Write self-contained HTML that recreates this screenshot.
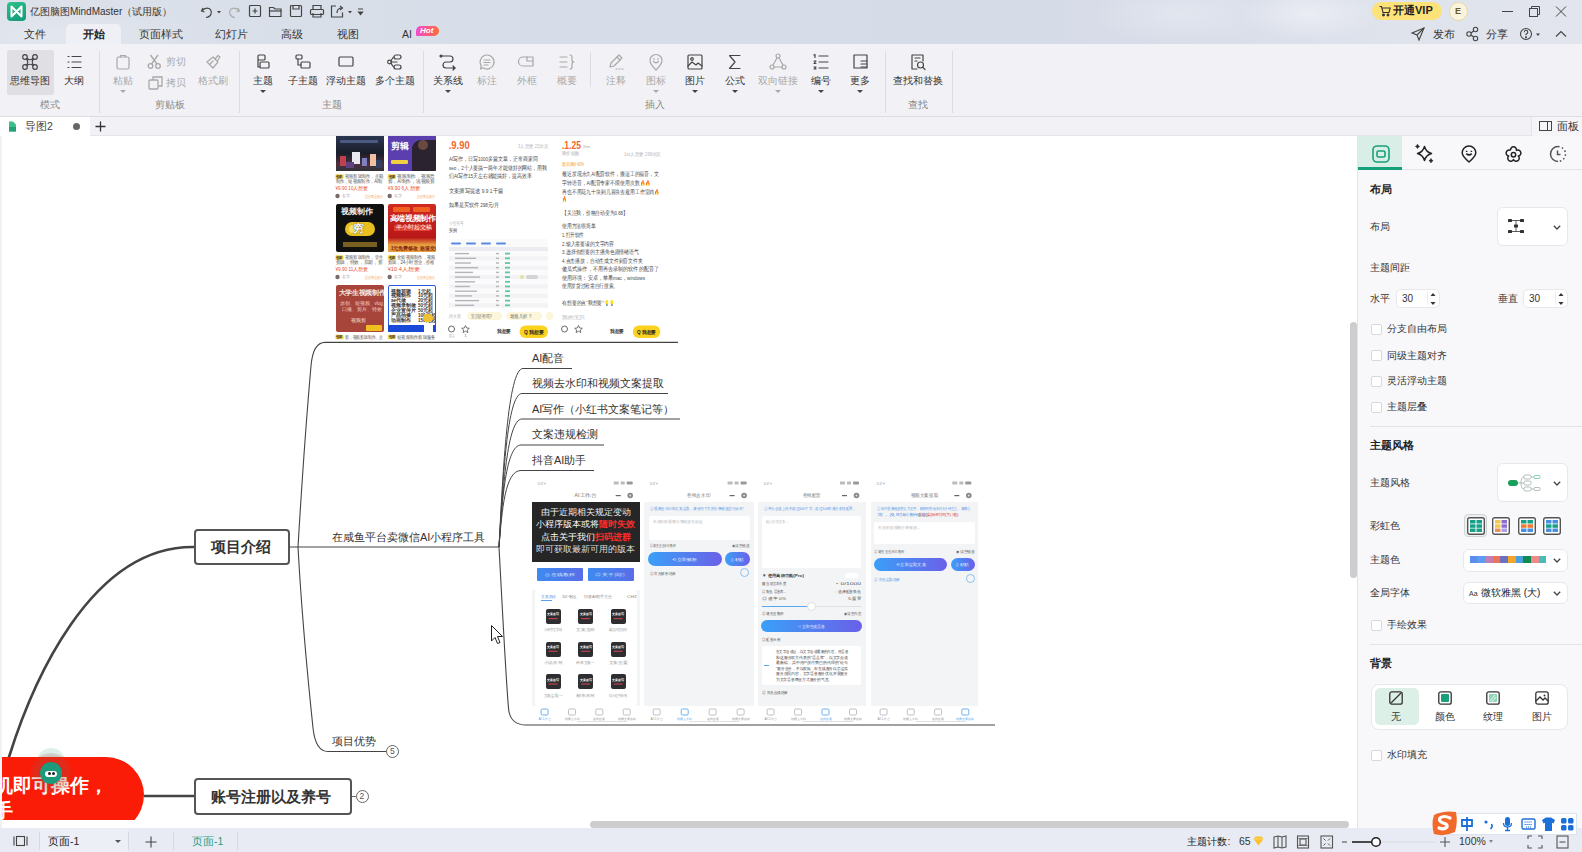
<!DOCTYPE html>
<html><head><meta charset="utf-8">
<style>
*{margin:0;padding:0;box-sizing:border-box}
html,body{width:1582px;height:852px;overflow:hidden;background:#fff;font-family:"Liberation Sans",sans-serif;color:#333}
.a{position:absolute}
.t{position:absolute;white-space:nowrap;line-height:1}
#titlebar{left:0;top:0;width:1582px;height:44px;background:radial-gradient(ellipse 70px 26px at 1310px 14px,rgba(238,240,246,0.8),rgba(238,240,246,0) 100%),radial-gradient(ellipse 90px 30px at 1180px 14px,rgba(232,236,243,0.6),rgba(232,236,243,0) 100%),radial-gradient(ellipse 140px 30px at 60px 36px,rgba(230,234,241,0.7),rgba(230,234,241,0) 100%),linear-gradient(90deg,#dce1ea 0%,#d9dfe9 20%,#d6dce8 45%,#d5dbe7 65%,#d9dde9 75%,#dfe3ec 88%,#e2e5ed 100%)}
#ribbon{left:0;top:44px;width:1582px;height:73px;background:#f2f2f6;border-bottom:1px solid #dcdce2}
#doctabs{left:0;top:117px;width:1582px;height:19px;background:#f2f2f6;border-bottom:1px solid #e4e4ea}
#canvas{left:0;top:136px;width:1357px;height:692px;background:#fff;overflow:hidden}
#panel{left:1357px;top:136px;width:225px;height:692px;background:#f8f8fb;border-left:1px solid #e2e2e8}
#status{left:0;top:828px;width:1582px;height:24px;background:#e8ebf3}
.rl{font-size:11px;color:#333}
.rg{font-size:11px;color:#aaa}
.gl{font-size:10px;color:#999}
.sep{position:absolute;top:52px;width:1px;height:60px;background:#dedee4}
svg{position:absolute;overflow:visible}
</style></head><body>
<!-- TITLE BAR -->
<div id="titlebar" class="a"></div>
<div id="ribbon" class="a"></div>
<!--TITLE-->
<!-- logo -->
<div class="a" style="left:7px;top:2px;width:19px;height:19px;border-radius:4px;background:linear-gradient(160deg,#2cc08a,#16987a)"></div>
<svg style="left:7px;top:2px" width="19" height="19" viewBox="0 0 19 19"><path d="M4.5 4.5 L4.5 14.5 L14.5 4.5 L14.5 14.5 Z" fill="none" stroke="#fff" stroke-width="2" stroke-linejoin="round"/></svg>
<div class="t" style="left:30px;top:7px;font-size:10px;color:#333">亿图脑图MindMaster（试用版）</div>
<!-- quick access -->
<svg style="left:200px;top:4px" width="170" height="16" viewBox="0 0 170 16" fill="none" stroke="#444" stroke-width="1.2">
 <path d="M3 4 L1.5 7 L4.5 8"/><path d="M2 7 Q5 3 9 4.5 Q12 6 11 10 Q10 13 6 13.5"/>
 <path d="M17 7 l4 0 l-2 2.5z" fill="#444" stroke="none"/>
 <g stroke="#aaa"><path d="M38 4 L39.5 7 L36.5 8"/><path d="M39 7 Q36 3 32 4.5 Q29 6 30 10 Q31 13 35 13.5"/></g>
 <rect x="49.5" y="1.5" width="11" height="11" rx="1"/><path d="M55 4.5v5M52.5 7h5"/>
 <path d="M69.5 3.5h4l1.5 1.5h6v7.5h-11.5z"/><path d="M69.5 7h12"/>
 <rect x="90.5" y="1.5" width="11" height="11" rx="1"/><path d="M93 1.5v3.5h6v-3.5"/>
 <path d="M113 5.5v-4h8v4"/><rect x="110.5" y="5.5" width="13" height="5" rx="1"/><path d="M113 9v4h8v-4"/>
 <path d="M136 2h-4.5v11h11v-4.5"/><path d="M137 9 Q137 4 142 4"/><path d="M140 2l2.5 2l-2.5 2"/>
 <path d="M148 7 l4 0 l-2 2.5z" fill="#444" stroke="none"/>
 <path d="M158 5h5M158.5 8l2 2.5l2-2.5z" fill="#444"/>
</svg>
<!-- tabs -->
<div class="a" style="left:66px;top:24px;width:55px;height:20px;border-radius:5px 5px 0 0;background:#eef0f5"></div>
<div class="t" style="left:24px;top:29px;font-size:10.5px;color:#333">文件</div>
<div class="t" style="left:83px;top:29px;font-size:10.5px;color:#222;font-weight:bold">开始</div>
<div class="t" style="left:139px;top:29px;font-size:10.5px;color:#333">页面样式</div>
<div class="t" style="left:215px;top:29px;font-size:10.5px;color:#333">幻灯片</div>
<div class="t" style="left:281px;top:29px;font-size:10.5px;color:#333">高级</div>
<div class="t" style="left:337px;top:29px;font-size:10.5px;color:#333">视图</div>
<div class="t" style="left:402px;top:29px;font-size:10.5px;color:#333">AI</div>
<div class="a" style="left:416px;top:26px;width:23px;height:10px;border-radius:5px 5px 5px 1px;background:linear-gradient(90deg,#f04bd0,#ff6b3a)"></div>
<div class="t" style="left:420px;top:27px;font-size:8px;color:#fff;font-weight:bold;font-style:italic">Hot</div>
<!-- right side -->
<div class="a" style="left:1372px;top:2px;width:70px;height:18px;border-radius:9px;background:#fde27a"></div>
<svg style="left:1379px;top:5px" width="12" height="12" viewBox="0 0 12 12" fill="none" stroke="#333" stroke-width="1.1"><path d="M0.5 1.5h2l1.5 6h6l1.2-4.5h-8"/><circle cx="4.5" cy="10" r="0.9" fill="#333"/><circle cx="9" cy="10" r="0.9" fill="#333"/></svg>
<div class="t" style="left:1393px;top:5px;font-size:11px;color:#222;font-weight:bold">开通VIP</div>
<div class="a" style="left:1449px;top:2px;width:19px;height:19px;border-radius:50%;background:#fbf4dd;border:1px solid #e8d9a8"></div>
<div class="t" style="left:1455px;top:7px;font-size:9px;color:#6b5a2a;font-weight:bold">E</div>
<svg style="left:1500px;top:4px" width="70" height="16" viewBox="0 0 70 16" fill="none" stroke="#444" stroke-width="1">
 <path d="M2 7.5h11"/>
 <rect x="29.5" y="4.5" width="8" height="8"/><path d="M31.5 4.5v-2h8v8h-2"/>
 <path d="M56 2.5l10 10M66 2.5l-10 10"/>
</svg>
<svg style="left:1410px;top:26px" width="160" height="16" viewBox="0 0 160 16" fill="none" stroke="#444" stroke-width="1.1">
 <path d="M14 2 L2 7 L7 9 L9 14 Z"/><path d="M7 9 L14 2"/>
 <circle cx="59" cy="8" r="2.2"/><circle cx="65.5" cy="3.5" r="2.2"/><circle cx="65.5" cy="12.5" r="2.2"/><path d="M61 7l2.6-2M61 9l2.6 2"/>
 <circle cx="116" cy="8" r="5.5"/><path d="M114.2 6.3 Q114.2 4.3 116 4.3 Q117.8 4.3 117.8 6.2 Q117.8 7.5 116 8.2 V9.3"/><circle cx="116" cy="11.3" r="0.5" fill="#444"/>
 <path d="M126 7.5l4 0l-2 2.5z" fill="#444" stroke="none"/>
 <path d="M146 10.5l5-5l5 5"/>
</svg>
<div class="t" style="left:1433px;top:29px;font-size:11px;color:#333">发布</div>
<div class="t" style="left:1486px;top:29px;font-size:11px;color:#333">分享</div>
<!--/TITLE-->
<!--RIBBON--><div class="a" style="left:7px;top:50px;width:47px;height:45px;background:#dfdfe4;border-radius:2px"></div>
<svg style="left:20px;top:52px" width="20" height="20" viewBox="0 0 20 20" fill="none" stroke="#454545" stroke-width="1.2" stroke-linecap="round" stroke-linejoin="round"><circle cx="5" cy="5" r="2.3"/><circle cx="15" cy="5" r="2.3"/><circle cx="5" cy="15" r="2.3"/><circle cx="15" cy="15" r="2.3"/><path d="M7 6.5 Q10 9 13 6.5 M7 13.5 Q10 11 13 13.5 M6.5 7 Q9 10 6.5 13 M13.5 7 Q11 10 13.5 13"/></svg>
<div class="t" style="left:-10px;width:80px;text-align:center;top:76px;font-size:10px;color:#333">思维导图</div>
<svg style="left:64px;top:52px" width="20" height="20" viewBox="0 0 20 20" fill="none" stroke="#454545" stroke-width="1.2" stroke-linecap="round" stroke-linejoin="round"><path d="M4 4.5h1M8 4.5h9M4 10h1M8 10h9M4 15.5h1M8 15.5h9"/></svg>
<div class="t" style="left:34px;width:80px;text-align:center;top:76px;font-size:10px;color:#333">大纲</div>
<svg style="left:113px;top:52px" width="20" height="20" viewBox="0 0 20 20" fill="none" stroke="#a8a8a8" stroke-width="1.2" stroke-linecap="round" stroke-linejoin="round"><rect x="4" y="5" width="12" height="12" rx="1.5"/><path d="M7.5 5V3.5h5V5"/></svg>
<div class="t" style="left:83px;width:80px;text-align:center;top:76px;font-size:10px;color:#a8a8a8">粘贴</div>
<div class="a" style="left:120px;top:90px;width:0;height:0;border-left:3px solid transparent;border-right:3px solid transparent;border-top:3px solid #a8a8a8"></div>
<svg style="left:145px;top:52px" width="20" height="20" viewBox="0 0 20 20" fill="none" stroke="#a8a8a8" stroke-width="1.3"><circle cx="5.5" cy="14" r="2.3"/><circle cx="13" cy="14" r="2.3"/><path d="M6.5 12L13 3M12 12L5.5 3"/></svg>
<div class="t" style="left:166px;top:57px;font-size:10px;color:#a8a8a8">剪切</div>
<svg style="left:146px;top:73px" width="20" height="20" viewBox="0 0 20 20" fill="none" stroke="#a8a8a8" stroke-width="1.3"><rect x="3" y="7" width="9" height="9" rx="1"/><path d="M7 7V4h9v9h-4"/></svg>
<div class="t" style="left:166px;top:78px;font-size:10px;color:#a8a8a8">拷贝</div>
<svg style="left:203px;top:52px" width="20" height="20" viewBox="0 0 20 20" fill="none" stroke="#a8a8a8" stroke-width="1.2" stroke-linecap="round" stroke-linejoin="round"><path d="M4 10l6-5l5 5l-5 6z"/><path d="M12 7l3-3.5l2 1.5l-2.5 3.5"/><path d="M7 12l3-3"/></svg>
<div class="t" style="left:173px;width:80px;text-align:center;top:76px;font-size:10px;color:#a8a8a8">格式刷</div>
<svg style="left:253px;top:52px" width="20" height="20" viewBox="0 0 20 20" fill="none" stroke="#454545" stroke-width="1.2" stroke-linecap="round" stroke-linejoin="round"><rect x="5" y="3" width="7" height="5" rx="1"/><path d="M5 8v7h2"/><rect x="7" y="10" width="9" height="6" rx="1"/></svg>
<div class="t" style="left:223px;width:80px;text-align:center;top:76px;font-size:10px;color:#333">主题</div>
<div class="a" style="left:260px;top:90px;width:0;height:0;border-left:3px solid transparent;border-right:3px solid transparent;border-top:3px solid #454545"></div>
<svg style="left:293px;top:52px" width="20" height="20" viewBox="0 0 20 20" fill="none" stroke="#454545" stroke-width="1.2" stroke-linecap="round" stroke-linejoin="round"><rect x="3" y="3" width="6" height="4" rx="1"/><path d="M5 7v6h3"/><rect x="8" y="10" width="9" height="6" rx="1"/></svg>
<div class="t" style="left:263px;width:80px;text-align:center;top:76px;font-size:10px;color:#333">子主题</div>
<svg style="left:336px;top:52px" width="20" height="20" viewBox="0 0 20 20" fill="none" stroke="#454545" stroke-width="1.2" stroke-linecap="round" stroke-linejoin="round"><rect x="3" y="5" width="14" height="9" rx="1"/></svg>
<div class="t" style="left:306px;width:80px;text-align:center;top:76px;font-size:10px;color:#333">浮动主题</div>
<svg style="left:385px;top:52px" width="20" height="20" viewBox="0 0 20 20" fill="none" stroke="#454545" stroke-width="1.2" stroke-linecap="round" stroke-linejoin="round"><rect x="9" y="3" width="7" height="4" rx="2"/><rect x="9" y="13" width="7" height="4" rx="2"/><circle cx="4.5" cy="10" r="1.8"/><path d="M6 9Q8 5 9 5M6 11Q8 15 9 15M6.3 10H12"/></svg>
<div class="t" style="left:355px;width:80px;text-align:center;top:76px;font-size:10px;color:#333">多个主题</div>
<svg style="left:438px;top:52px" width="20" height="20" viewBox="0 0 20 20" fill="none" stroke="#454545" stroke-width="1.2" stroke-linecap="round" stroke-linejoin="round"><circle cx="3" cy="4" r="1" fill="#3a3a3a"/><path d="M3 4h9a3 3 0 0 1 0 6H8a3 3 0 0 0 0 6h9"/><path d="M15 14l2 2l-2 2" fill="#3a3a3a"/></svg>
<div class="t" style="left:408px;width:80px;text-align:center;top:76px;font-size:10px;color:#333">关系线</div>
<div class="a" style="left:445px;top:90px;width:0;height:0;border-left:3px solid transparent;border-right:3px solid transparent;border-top:3px solid #454545"></div>
<svg style="left:477px;top:52px" width="20" height="20" viewBox="0 0 20 20" fill="none" stroke="#a8a8a8" stroke-width="1.2" stroke-linecap="round" stroke-linejoin="round"><path d="M10 3a7 7 0 1 1-4 12.7L3.5 17l0.8-3.2A7 7 0 0 1 10 3z"/><path d="M7 8h6M7 10.5h6M7 13h4"/></svg>
<div class="t" style="left:447px;width:80px;text-align:center;top:76px;font-size:10px;color:#a8a8a8">标注</div>
<svg style="left:517px;top:52px" width="20" height="20" viewBox="0 0 20 20" fill="none" stroke="#a8a8a8" stroke-width="1.2" stroke-linecap="round" stroke-linejoin="round"><path d="M6 5h10v9H6a4.5 4.5 0 0 1 0-9z"/><path d="M10 5v4h6"/></svg>
<div class="t" style="left:487px;width:80px;text-align:center;top:76px;font-size:10px;color:#a8a8a8">外框</div>
<svg style="left:557px;top:52px" width="20" height="20" viewBox="0 0 20 20" fill="none" stroke="#a8a8a8" stroke-width="1.2" stroke-linecap="round" stroke-linejoin="round"><path d="M3 5h7M3 10h7M3 15h7M13 3q2 0 2 2v3q0 2 2 2q-2 0-2 2v3q0 2-2 2"/></svg>
<div class="t" style="left:527px;width:80px;text-align:center;top:76px;font-size:10px;color:#a8a8a8">概要</div>
<svg style="left:606px;top:52px" width="20" height="20" viewBox="0 0 20 20" fill="none" stroke="#a8a8a8" stroke-width="1.2" stroke-linecap="round" stroke-linejoin="round"><path d="M4 15l1-4l8-8l3 3l-8 8z"/><path d="M11 5l3 3"/><path d="M10 17h1M13 17h1M16 17h1"/></svg>
<div class="t" style="left:576px;width:80px;text-align:center;top:76px;font-size:10px;color:#a8a8a8">注释</div>
<svg style="left:646px;top:52px" width="20" height="20" viewBox="0 0 20 20" fill="none" stroke="#a8a8a8" stroke-width="1.2" stroke-linecap="round" stroke-linejoin="round"><path d="M10 18C6 14 4 11 4 8.5a6 6 0 0 1 12 0C16 11 14 14 10 18z"/><path d="M7.5 9.5q2.5 2.5 5 0M8 6.5v1M12 6.5v1"/></svg>
<div class="t" style="left:616px;width:80px;text-align:center;top:76px;font-size:10px;color:#a8a8a8">图标</div>
<div class="a" style="left:653px;top:90px;width:0;height:0;border-left:3px solid transparent;border-right:3px solid transparent;border-top:3px solid #a8a8a8"></div>
<svg style="left:685px;top:52px" width="20" height="20" viewBox="0 0 20 20" fill="none" stroke="#454545" stroke-width="1.2" stroke-linecap="round" stroke-linejoin="round"><rect x="3" y="3" width="14" height="14" rx="1"/><circle cx="7" cy="7" r="1.3"/><path d="M3 14l4-4l4 3l2-2l4 3"/></svg>
<div class="t" style="left:655px;width:80px;text-align:center;top:76px;font-size:10px;color:#333">图片</div>
<div class="a" style="left:692px;top:90px;width:0;height:0;border-left:3px solid transparent;border-right:3px solid transparent;border-top:3px solid #454545"></div>
<svg style="left:725px;top:52px" width="20" height="20" viewBox="0 0 20 20" fill="none" stroke="#454545" stroke-width="1.2" stroke-linecap="round" stroke-linejoin="round"><path d="M15 3.5H4.5l5.5 6.5l-5.5 6.5H15"/></svg>
<div class="t" style="left:695px;width:80px;text-align:center;top:76px;font-size:10px;color:#333">公式</div>
<div class="a" style="left:732px;top:90px;width:0;height:0;border-left:3px solid transparent;border-right:3px solid transparent;border-top:3px solid #454545"></div>
<svg style="left:768px;top:52px" width="20" height="20" viewBox="0 0 20 20" fill="none" stroke="#a8a8a8" stroke-width="1.2" stroke-linecap="round" stroke-linejoin="round"><circle cx="10" cy="4" r="2"/><circle cx="4" cy="15" r="2"/><circle cx="16" cy="15" r="2"/><path d="M9 6l-4 7M11 6l4 7M6 15h8"/></svg>
<div class="t" style="left:738px;width:80px;text-align:center;top:76px;font-size:10px;color:#a8a8a8">双向链接</div>
<div class="a" style="left:775px;top:90px;width:0;height:0;border-left:3px solid transparent;border-right:3px solid transparent;border-top:3px solid #a8a8a8"></div>
<svg style="left:811px;top:52px" width="20" height="20" viewBox="0 0 20 20" fill="none" stroke="#454545" stroke-width="1.2" stroke-linecap="round" stroke-linejoin="round"><path d="M8 4h9M8 10h9M8 16h9"/><path d="M3 3l1-0.5v3M3 9h2l-2 2.5h2M3 15h2l-1 1l1 1h-2"/></svg>
<div class="t" style="left:781px;width:80px;text-align:center;top:76px;font-size:10px;color:#333">编号</div>
<div class="a" style="left:818px;top:90px;width:0;height:0;border-left:3px solid transparent;border-right:3px solid transparent;border-top:3px solid #454545"></div>
<svg style="left:850px;top:52px" width="20" height="20" viewBox="0 0 20 20" fill="none" stroke="#454545" stroke-width="1.2" stroke-linecap="round" stroke-linejoin="round"><path d="M17 16H4V3h13v13"/><path d="M11 9h6M11 12h6M11 15h6"/></svg>
<div class="t" style="left:820px;width:80px;text-align:center;top:76px;font-size:10px;color:#333">更多</div>
<div class="a" style="left:857px;top:90px;width:0;height:0;border-left:3px solid transparent;border-right:3px solid transparent;border-top:3px solid #454545"></div>
<svg style="left:908px;top:52px" width="20" height="20" viewBox="0 0 20 20" fill="none" stroke="#454545" stroke-width="1.2" stroke-linecap="round" stroke-linejoin="round"><path d="M15 9V3H4v14h5"/><path d="M7 6h5M7 9h2"/><circle cx="12.5" cy="13" r="3"/><path d="M14.7 15.2l2.3 2.3"/></svg>
<div class="t" style="left:878px;width:80px;text-align:center;top:76px;font-size:10px;color:#333">查找和替换</div>
<div class="a" style="left:99px;top:51px;width:1px;height:62px;background:#dcdce2"></div>
<div class="a" style="left:239px;top:51px;width:1px;height:62px;background:#dcdce2"></div>
<div class="a" style="left:423px;top:51px;width:1px;height:62px;background:#dcdce2"></div>
<div class="a" style="left:590px;top:52px;width:1px;height:35px;background:#dcdce2"></div>
<div class="a" style="left:885px;top:51px;width:1px;height:62px;background:#dcdce2"></div>
<div class="a" style="left:952px;top:51px;width:1px;height:62px;background:#dcdce2"></div>
<div class="t" style="left:20px;width:60px;text-align:center;top:100px;font-size:10px;color:#888">模式</div>
<div class="t" style="left:140px;width:60px;text-align:center;top:100px;font-size:10px;color:#888">剪贴板</div>
<div class="t" style="left:302px;width:60px;text-align:center;top:100px;font-size:10px;color:#888">主题</div>
<div class="t" style="left:625px;width:60px;text-align:center;top:100px;font-size:10px;color:#888">插入</div>
<div class="t" style="left:888px;width:60px;text-align:center;top:100px;font-size:10px;color:#888">查找</div>
<!--/RIBBON-->



<div id="doctabs" class="a"></div>
<div id="canvas" class="a"></div>
<!--CANVAS--><div class="a" style="left:335.5px;top:136px;width:48.0px;height:35px;background:linear-gradient(180deg,#2a3550 0%,#1a1e2a 50%,#4a3040 80%,#30323a 100%);border-radius:0px;"></div>
<div class="a" style="left:387.7px;top:136px;width:48.10000000000002px;height:35px;background:linear-gradient(90deg,#6a4bc0 0%,#5a3aa8 55%,#2a2030 75%,#3a2a3a 100%);border-radius:0px;"></div>
<div class="a" style="left:335.5px;top:203.7px;width:48.0px;height:48.5px;background:#101010;border-radius:2px;"></div>
<div class="a" style="left:387.7px;top:203.7px;width:48.10000000000002px;height:48.5px;background:linear-gradient(180deg,#d02a20,#b81818 70%,#e8a040 85%,#d03020 100%);border-radius:2px;"></div>
<div class="a" style="left:335.5px;top:284.6px;width:48.0px;height:47.39999999999998px;background:#a8453a;border-radius:2px;"></div>
<div class="a" style="left:387.7px;top:284.6px;width:48.10000000000002px;height:47.39999999999998px;background:#fff;border-radius:2px;"></div>
<div class="a" style="left:387.7px;top:136px;width:48.10000000000002px;height:35px;background:#5c3fae;border-radius:0px;border-radius:0 0 3px 3px"></div>
<div class="a" style="left:412px;top:140px;width:23.80000000000001px;height:31px;background:#2b2330;border-radius:0px;border-radius:9px 0 3px 0"></div>
<div class="a" style="left:418px;top:140px;width:10px;height:10px;background:#6a4a40;border-radius:5px;"></div>
<div class="t" style="left:391px;top:141.5px;font-size:9px;color:#fff;font-weight:bold;">剪辑</div>
<div class="a" style="left:391px;top:160px;width:17px;height:4px;background:#f0d040;border-radius:1px;"></div>
<div class="a" style="left:340px;top:140px;width:38px;height:3px;background:#4a5a80;border-radius:1px;"></div>
<div class="a" style="left:340px;top:156px;width:6px;height:10px;background:#c04050;border-radius:0px;"></div>
<div class="a" style="left:352px;top:152px;width:8px;height:12px;background:#e8e8f0;border-radius:0px;"></div>
<div class="a" style="left:362px;top:158px;width:5px;height:8px;background:#8080c0;border-radius:0px;"></div>
<div class="a" style="left:370px;top:154px;width:6px;height:12px;background:#f0c0a0;border-radius:0px;"></div>
<div class="a" style="left:346px;top:162px;width:8px;height:6px;background:#604080;border-radius:0px;"></div>
<div class="a" style="left:376px;top:160px;width:6px;height:8px;background:#304060;border-radius:0px;"></div>
<div class="a" style="left:335.5px;top:203.7px;width:48px;height:48.5px;overflow:hidden;border-radius:2px"><div class="t" style="left:5px;top:4px;font-size:8px;color:#eee;font-weight:bold">视频制作</div><div class="a" style="left:9px;top:18px;width:30px;height:14px;border-radius:8px;background:#e8c020"></div><div class="a" style="left:13px;top:21px;width:10px;height:8px;border-radius:4px;background:#f4e070"></div><div class="t" style="left:17px;top:19px;font-size:11px;color:#fff;font-weight:bold;text-shadow:0 0 1px #000">穷</div><div class="a" style="left:7px;top:38px;width:34px;height:5px;background:#7a6020"></div></div>
<div class="a" style="left:387.7px;top:203.7px;width:48px;height:48.5px;overflow:hidden;border-radius:2px"><div class="a" style="left:5px;top:3px;width:17px;height:5px;border-radius:1px;background:#f06020"></div><div class="a" style="left:25px;top:3px;width:17px;height:5px;border-radius:1px;background:#f06020"></div><div class="t" style="left:2px;top:11px;font-size:7.5px;color:#fff;font-weight:bold;letter-spacing:-0.3px">高端视频制作</div><div class="a" style="left:6px;top:21px;width:36px;height:6px;background:#e04030"></div><div class="t" style="left:8px;top:21px;font-size:5.5px;color:#ffe">半小时起交稿</div><div class="a" style="left:0;top:41px;width:48px;height:8px;background:#e8a040"></div><div class="t" style="left:3px;top:42.5px;font-size:5px;color:#802010;font-weight:bold">1元免费修改 急速交稿</div></div>
<div class="a" style="left:335.5px;top:284.6px;width:48px;height:47.4px;overflow:hidden;border-radius:2px"><div class="t" style="left:3px;top:5px;font-size:6.6px;color:#f8e8e0;font-weight:bold;letter-spacing:-0.3px">大学生视频制作</div><div class="t" style="left:4px;top:17px;font-size:4.5px;color:#f0d0c8">原创、短视频、vlog、</div><div class="t" style="left:6px;top:23px;font-size:4.5px;color:#f0d0c8">口播、剪片、特效</div><div class="t" style="left:15px;top:33px;font-size:5px;color:#f8e0d8">视频剪</div><div class="a" style="left:30px;top:40px;width:16px;height:6px;border-radius:1px;background:#f0c020"></div></div>
<div class="a" style="left:387.7px;top:284.6px;width:48.10000000000002px;height:47.39999999999998px;background:#fff;border-radius:2px;border:1.5px solid #2a5ae0"></div>
<div class="t" style="left:391px;top:289.5px;font-size:4.6px;color:#333;font-weight:bold">视频剪辑</div><div class="t" style="left:418px;top:289.5px;font-size:4.6px;color:#333;font-weight:bold">1元起</div>
<div class="t" style="left:391px;top:294.4px;font-size:4.6px;color:#333;font-weight:bold">视频制作</div><div class="t" style="left:418px;top:294.4px;font-size:4.6px;color:#333;font-weight:bold">10元起</div>
<div class="t" style="left:391px;top:299.3px;font-size:4.6px;color:#333;font-weight:bold">ae代做</div><div class="t" style="left:418px;top:299.3px;font-size:4.6px;color:#333;font-weight:bold">20元起</div>
<div class="t" style="left:391px;top:304.2px;font-size:4.6px;color:#333;font-weight:bold">视频录制做</div><div class="t" style="left:418px;top:304.2px;font-size:4.6px;color:#333;font-weight:bold">50元起</div>
<div class="t" style="left:391px;top:309.1px;font-size:4.6px;color:#333;font-weight:bold">企业宣传片</div><div class="t" style="left:418px;top:309.1px;font-size:4.6px;color:#333;font-weight:bold">50元起</div>
<div class="t" style="left:391px;top:314.0px;font-size:4.6px;color:#333;font-weight:bold">产品拍摄</div><div class="t" style="left:418px;top:314.0px;font-size:4.6px;color:#333;font-weight:bold">100元起</div>
<div class="t" style="left:391px;top:318.9px;font-size:4.6px;color:#333;font-weight:bold">动画制作</div><div class="t" style="left:418px;top:318.9px;font-size:4.6px;color:#333;font-weight:bold">150元起</div>
<div class="a" style="left:387.7px;top:325px;width:48.10000000000002px;height:7px;background:#1a4ad8;border-radius:0px;"></div>
<div class="a" style="left:424px;top:325px;width:9px;height:7px;background:#fff;border-radius:0px;"></div>
<div class="a" style="left:423px;top:314px;width:10px;height:8px;background:#f0c030;border-radius:4px;"></div>
<svg style="left:0;top:0" width="700" height="352" viewBox="0 0 700 352" font-family="Liberation Sans, sans-serif"><rect x="335.5" y="174.3" width="8" height="4.4" fill="#f4d34a"/><text x="336.3" y="177.9" font-size="3.8" fill="#333" textLength="6.4" lengthAdjust="spacingAndGlyphs" font-weight="bold">包邮</text><text x="345.0" y="178.4" font-size="5" fill="#555" textLength="38.0" lengthAdjust="spacingAndGlyphs">视频剪辑制作，企鹅</text><text x="335.5" y="183.4" font-size="5" fill="#555" textLength="47.0" lengthAdjust="spacingAndGlyphs">制作，短视频制作，AI制</text><text x="335.5" y="190.0" font-size="4.6" fill="#f05030" textLength="33.0" lengthAdjust="spacingAndGlyphs">¥9.90 10人想要</text><circle cx="337.5" cy="196.0" r="2.2" fill="#7a6a6a"/><text x="341.5" y="197.4" font-size="3.8" fill="#aaa" textLength="8.0" lengthAdjust="spacingAndGlyphs">名字</text><text x="364.5" y="197.6" font-size="4.2" fill="#f5b070" textLength="18.0" lengthAdjust="spacingAndGlyphs">描述商品服务</text><rect x="387.7" y="174.3" width="8" height="4.4" fill="#f4d34a"/><text x="388.5" y="177.9" font-size="3.8" fill="#333" textLength="6.4" lengthAdjust="spacingAndGlyphs" font-weight="bold">包邮</text><text x="397.2" y="178.4" font-size="5" fill="#555" textLength="38.0" lengthAdjust="spacingAndGlyphs">视频制作，视频意</text><text x="387.7" y="183.4" font-size="5" fill="#555" textLength="47.0" lengthAdjust="spacingAndGlyphs">剪，AI制作，说视频剪</text><text x="387.7" y="190.0" font-size="4.6" fill="#f05030" textLength="33.0" lengthAdjust="spacingAndGlyphs">¥9.90 6人想要</text><circle cx="389.7" cy="196.0" r="2.2" fill="#7a6a6a"/><text x="393.7" y="197.4" font-size="3.8" fill="#aaa" textLength="8.0" lengthAdjust="spacingAndGlyphs">名字</text><text x="416.7" y="197.6" font-size="4.2" fill="#f5b070" textLength="18.0" lengthAdjust="spacingAndGlyphs">描述商品服务</text><rect x="335.5" y="255.3" width="8" height="4.4" fill="#f4d34a"/><text x="336.3" y="258.9" font-size="3.8" fill="#333" textLength="6.4" lengthAdjust="spacingAndGlyphs" font-weight="bold">包邮</text><text x="345.0" y="259.4" font-size="5" fill="#555" textLength="38.0" lengthAdjust="spacingAndGlyphs">视频剪辑制作，学生</text><text x="335.5" y="264.4" font-size="5" fill="#555" textLength="47.0" lengthAdjust="spacingAndGlyphs">剪辑，特效，后期，剪</text><text x="335.5" y="271.0" font-size="4.6" fill="#f05030" textLength="33.0" lengthAdjust="spacingAndGlyphs">¥9.90 11人想要</text><circle cx="337.5" cy="277.0" r="2.2" fill="#7a6a6a"/><text x="341.5" y="278.4" font-size="3.8" fill="#aaa" textLength="8.0" lengthAdjust="spacingAndGlyphs">名字</text><text x="364.5" y="278.6" font-size="4.2" fill="#f5b070" textLength="18.0" lengthAdjust="spacingAndGlyphs">描述商品服务</text><rect x="387.7" y="255.3" width="8" height="4.4" fill="#f4d34a"/><text x="388.5" y="258.9" font-size="3.8" fill="#333" textLength="6.4" lengthAdjust="spacingAndGlyphs" font-weight="bold">包邮</text><text x="397.2" y="259.4" font-size="5" fill="#555" textLength="38.0" lengthAdjust="spacingAndGlyphs">全能视频制作，视频</text><text x="387.7" y="264.4" font-size="5" fill="#555" textLength="47.0" lengthAdjust="spacingAndGlyphs">剪辑，24小时营业，价格</text><text x="387.7" y="271.0" font-size="4.6" fill="#f05030" textLength="33.0" lengthAdjust="spacingAndGlyphs">¥10 4人想要</text><circle cx="389.7" cy="277.0" r="2.2" fill="#7a6a6a"/><text x="393.7" y="278.4" font-size="3.8" fill="#aaa" textLength="8.0" lengthAdjust="spacingAndGlyphs">名字</text><text x="416.7" y="278.6" font-size="4.2" fill="#f5b070" textLength="18.0" lengthAdjust="spacingAndGlyphs">描述商品服务</text><rect x="335.5" y="334.8" width="8" height="4.4" fill="#f4d34a"/><text x="336.3" y="338.4" font-size="3.8" fill="#333" textLength="6.4" lengthAdjust="spacingAndGlyphs" font-weight="bold">包邮</text><text x="345.0" y="338.9" font-size="5" fill="#555" textLength="38.0" lengthAdjust="spacingAndGlyphs">剪，视频剪辑制作，企</text><rect x="387.7" y="334.8" width="8" height="4.4" fill="#f4d34a"/><text x="388.5" y="338.4" font-size="3.8" fill="#333" textLength="6.4" lengthAdjust="spacingAndGlyphs" font-weight="bold">包邮</text><text x="397.2" y="338.9" font-size="5" fill="#555" textLength="38.0" lengthAdjust="spacingAndGlyphs">短视频制作剪辑服务</text></svg>
<svg style="left:0;top:0" width="700" height="352" viewBox="0 0 700 352" font-family="Liberation Sans, sans-serif"><text x="448.7" y="148.5" font-size="10" fill="#f2662e" textLength="21.0" lengthAdjust="spacingAndGlyphs" font-weight="bold">.9.90</text><text x="518" y="148.1" font-size="4.5" fill="#b8b8bc" textLength="30.0" lengthAdjust="spacingAndGlyphs">3人想要 22浏览</text><text x="449" y="161.0" font-size="5.5" fill="#4a4a4e" textLength="88.5" lengthAdjust="spacingAndGlyphs">AI写作，日写1000多篇文章，正常商家同</text><text x="449" y="169.7" font-size="5.5" fill="#4a4a4e" textLength="98.0" lengthAdjust="spacingAndGlyphs">seo，2个人要搞一两年才能做好的网站，用我</text><text x="449" y="178.4" font-size="5.5" fill="#4a4a4e" textLength="82.5" lengthAdjust="spacingAndGlyphs">们AI写作15天左右就能搞好，提高效率</text><text x="449" y="192.6" font-size="5.5" fill="#4a4a4e" textLength="54.0" lengthAdjust="spacingAndGlyphs">文案撰写提速 9.9 1千篇</text><text x="449" y="206.5" font-size="5.5" fill="#4a4a4e" textLength="50.0" lengthAdjust="spacingAndGlyphs">如果是买软件 298元/月</text><text x="449" y="224.7" font-size="4.5" fill="#b0b0b4" textLength="14.6" lengthAdjust="spacingAndGlyphs">小红书号</text><text x="449" y="232.4" font-size="5" fill="#333" textLength="8.0" lengthAdjust="spacingAndGlyphs">实例</text><rect x="448.7" y="239" width="99.3" height="69" fill="#fafafb"/><rect x="451" y="242.5" width="10" height="2" rx="1" fill="#5a8ae0"/><rect x="466" y="242.5" width="10" height="2" rx="1" fill="#5a8ae0"/><rect x="481" y="242.5" width="10" height="2" rx="1" fill="#5a8ae0"/><rect x="496" y="242.5" width="10" height="2" rx="1" fill="#5a8ae0"/><rect x="449" y="247" width="99" height="4" fill="#ececf0"/><rect x="449" y="251.5" width="99" height="4.2" fill="#fbfbfc"/><rect x="455" y="252.9" width="14" height="1.4" fill="#b4b4ba"/><rect x="496" y="252.9" width="3" height="1.4" fill="#b4b4ba"/><rect x="505" y="252.7" width="5" height="1.8" fill="#5cc8a0"/><rect x="449" y="256.2" width="99" height="4.2" fill="#f3f3f6"/><rect x="455" y="257.6" width="21" height="1.4" fill="#b4b4ba"/><rect x="496" y="257.6" width="3" height="1.4" fill="#b4b4ba"/><rect x="505" y="257.4" width="5" height="1.8" fill="#5cc8a0"/><rect x="449" y="260.9" width="99" height="4.2" fill="#fbfbfc"/><rect x="455" y="262.3" width="16" height="1.4" fill="#b4b4ba"/><rect x="496" y="262.3" width="3" height="1.4" fill="#b4b4ba"/><rect x="505" y="262.1" width="5" height="1.8" fill="#5cc8a0"/><rect x="449" y="265.6" width="99" height="4.2" fill="#f3f3f6"/><rect x="455" y="267.0" width="23" height="1.4" fill="#b4b4ba"/><rect x="496" y="267.0" width="3" height="1.4" fill="#b4b4ba"/><rect x="505" y="266.8" width="5" height="1.8" fill="#5cc8a0"/><rect x="449" y="270.3" width="99" height="4.2" fill="#fbfbfc"/><rect x="455" y="271.7" width="18" height="1.4" fill="#b4b4ba"/><rect x="496" y="271.7" width="3" height="1.4" fill="#b4b4ba"/><rect x="505" y="271.5" width="5" height="1.8" fill="#5cc8a0"/><rect x="449" y="275.0" width="99" height="4.2" fill="#f3f3f6"/><rect x="455" y="276.4" width="25" height="1.4" fill="#b4b4ba"/><rect x="496" y="276.4" width="3" height="1.4" fill="#b4b4ba"/><rect x="505" y="276.2" width="5" height="1.8" fill="#5cc8a0"/><rect x="449" y="279.7" width="99" height="4.2" fill="#fbfbfc"/><rect x="455" y="281.1" width="20" height="1.4" fill="#b4b4ba"/><rect x="496" y="281.1" width="3" height="1.4" fill="#b4b4ba"/><rect x="505" y="280.9" width="5" height="1.8" fill="#5cc8a0"/><rect x="449" y="284.4" width="99" height="4.2" fill="#f3f3f6"/><rect x="455" y="285.8" width="15" height="1.4" fill="#b4b4ba"/><rect x="496" y="285.8" width="3" height="1.4" fill="#b4b4ba"/><rect x="505" y="285.6" width="5" height="1.8" fill="#5cc8a0"/><rect x="449" y="289.1" width="99" height="4.2" fill="#fbfbfc"/><rect x="455" y="290.5" width="22" height="1.4" fill="#b4b4ba"/><rect x="496" y="290.5" width="3" height="1.4" fill="#b4b4ba"/><rect x="505" y="290.3" width="5" height="1.8" fill="#5cc8a0"/><rect x="449" y="293.8" width="99" height="4.2" fill="#f3f3f6"/><rect x="455" y="295.2" width="17" height="1.4" fill="#b4b4ba"/><rect x="496" y="295.2" width="3" height="1.4" fill="#b4b4ba"/><rect x="505" y="295.0" width="5" height="1.8" fill="#5cc8a0"/><rect x="449" y="298.5" width="99" height="4.2" fill="#fbfbfc"/><rect x="455" y="299.9" width="24" height="1.4" fill="#b4b4ba"/><rect x="496" y="299.9" width="3" height="1.4" fill="#b4b4ba"/><rect x="505" y="299.7" width="5" height="1.8" fill="#5cc8a0"/><rect x="449" y="303.2" width="99" height="4.2" fill="#f3f3f6"/><rect x="455" y="304.6" width="19" height="1.4" fill="#b4b4ba"/><rect x="496" y="304.6" width="3" height="1.4" fill="#b4b4ba"/><rect x="505" y="304.4" width="5" height="1.8" fill="#5cc8a0"/><circle cx="522" cy="277" r="2" fill="#e8e0a0"/><rect x="526" y="275" width="12" height="4" rx="2" fill="#d4d4d8"/><text x="449" y="317.7" font-size="4.5" fill="#b0b0b4" textLength="12.0" lengthAdjust="spacingAndGlyphs">问大家</text><rect x="467" y="312" width="35" height="8" rx="4" fill="#fbf6dc"/><rect x="506" y="312" width="36" height="8" rx="4" fill="#fbf6dc"/><rect x="546" y="312" width="7" height="8" rx="3" fill="#fbf6dc"/><text x="471" y="317.7" font-size="4.5" fill="#666" textLength="22.0" lengthAdjust="spacingAndGlyphs">宝贝还在吗？</text><text x="510" y="317.7" font-size="4.5" fill="#666" textLength="22.0" lengthAdjust="spacingAndGlyphs">最低几折？</text><circle cx="451.5" cy="329" r="3" fill="none" stroke="#555" stroke-width="0.9"/><path d="M465.5 325.5l1.2 2.5l2.6 0.3l-2 1.7l0.6 2.6l-2.4-1.4l-2.4 1.4l0.6-2.6l-2-1.7l2.6-0.3z" fill="none" stroke="#555" stroke-width="0.8"/><text x="449" y="337.3" font-size="3.5" fill="#999" textLength="5.0" lengthAdjust="spacingAndGlyphs">留言</text><text x="464" y="337.3" font-size="3.5" fill="#999" textLength="3.0" lengthAdjust="spacingAndGlyphs">1</text><text x="497" y="333.4" font-size="5" fill="#333" textLength="14.0" lengthAdjust="spacingAndGlyphs" font-weight="bold">我想要</text><rect x="519.6" y="325.5" width="28.4" height="12.5" rx="6.2" fill="#fbd21e"/><text x="524" y="333.6" font-size="5" fill="#222" textLength="20.0" lengthAdjust="spacingAndGlyphs" font-weight="bold">Q 我想要</text><text x="562" y="148.8" font-size="10" fill="#f2662e" textLength="19.0" lengthAdjust="spacingAndGlyphs" font-weight="bold">.1.25</text><text x="583" y="147.8" font-size="3.5" fill="#aaa" textLength="7.0" lengthAdjust="spacingAndGlyphs">/km</text><text x="562" y="155.1" font-size="4.5" fill="#b0b0b4" textLength="17.0" lengthAdjust="spacingAndGlyphs">降价提醒</text><text x="624" y="155.7" font-size="4.5" fill="#b8b8bc" textLength="37.0" lengthAdjust="spacingAndGlyphs">1xx人想要 298浏览</text><text x="562" y="166.0" font-size="4.5" fill="#f0a030" textLength="22.0" lengthAdjust="spacingAndGlyphs">最后降价60%</text><text x="562" y="176.4" font-size="5.5" fill="#4a4a4e" textLength="97.0" lengthAdjust="spacingAndGlyphs">最近发现永久AI配音软件，搬运工的福音，文</text><text x="562" y="185.1" font-size="5.5" fill="#4a4a4e" textLength="89.0" lengthAdjust="spacingAndGlyphs">字转语音，AI配音专家不限使用次数🔥🔥</text><text x="562" y="193.8" font-size="5.5" fill="#4a4a4e" textLength="98.0" lengthAdjust="spacingAndGlyphs">再也不用花九十块到几百块去雇用工作室鸡🔥</text><text x="562" y="200.8" font-size="5.5" fill="#4a4a4e" textLength="5.0" lengthAdjust="spacingAndGlyphs">🔥</text><text x="562" y="214.5" font-size="5.5" fill="#4a4a4e" textLength="65.8" lengthAdjust="spacingAndGlyphs">【关注我，价格自动变为0.68】</text><text x="562" y="228.1" font-size="5.5" fill="#4a4a4e" textLength="33.5" lengthAdjust="spacingAndGlyphs">使用方法很简单</text><text x="562" y="237.1" font-size="5.5" fill="#4a4a4e" textLength="22.0" lengthAdjust="spacingAndGlyphs">1.打开软件</text><text x="562" y="245.6" font-size="5.5" fill="#4a4a4e" textLength="52.0" lengthAdjust="spacingAndGlyphs">2.输入需要读的文字内容</text><text x="562" y="254.1" font-size="5.5" fill="#4a4a4e" textLength="77.0" lengthAdjust="spacingAndGlyphs">3.选择你想要的主播角色跟情绪语气</text><text x="562" y="262.7" font-size="5.5" fill="#4a4a4e" textLength="80.7" lengthAdjust="spacingAndGlyphs">4.点击播放，自动生成文件到音文件夹</text><text x="562" y="271.1" font-size="5.5" fill="#4a4a4e" textLength="97.0" lengthAdjust="spacingAndGlyphs">傻瓜式操作，不用再去录制的软件的配音了</text><text x="562" y="280.1" font-size="5.5" fill="#4a4a4e" textLength="83.0" lengthAdjust="spacingAndGlyphs">使用环境：安卓，苹果mac，windows</text><text x="562" y="288.1" font-size="5.5" fill="#4a4a4e" textLength="55.9" lengthAdjust="spacingAndGlyphs">使用发货过程需自行搜索。</text><text x="562" y="305.1" font-size="5.5" fill="#4a4a4e" textLength="53.0" lengthAdjust="spacingAndGlyphs">有想要的点“我想要”💡💡</text><text x="562" y="318.7" font-size="4.5" fill="#b0b0b4" textLength="23.0" lengthAdjust="spacingAndGlyphs">我的宝贝</text><circle cx="564.5" cy="329" r="3" fill="none" stroke="#555" stroke-width="0.9"/><path d="M578.5 325.5l1.2 2.5l2.6 0.3l-2 1.7l0.6 2.6l-2.4-1.4l-2.4 1.4l0.6-2.6l-2-1.7l2.6-0.3z" fill="none" stroke="#555" stroke-width="0.8"/><text x="610" y="333.4" font-size="5" fill="#333" textLength="14.0" lengthAdjust="spacingAndGlyphs" font-weight="bold">我想要</text><rect x="632.8" y="325.5" width="27.5" height="12.5" rx="6.2" fill="#fbd21e"/><text x="637" y="333.6" font-size="5" fill="#222" textLength="19.0" lengthAdjust="spacingAndGlyphs" font-weight="bold">Q 我想要</text></svg>
<svg style="left:0;top:0" width="1357" height="852" viewBox="0 0 1357 852" fill="none" stroke="#444">
 <path d="M194 547 C89 545.6 30.9 687 9 757 L7.5 762" stroke="#444" stroke-width="2.6"/>
 <path d="M144 796 H194" stroke="#444" stroke-width="2.4"/>
 <path d="M290 547 H499" stroke-width="1.1"/>
 <path d="M298 547 C302 480 308 400 311 366 Q313 342.4 325 342.4 H678" stroke-width="1.1"/>
 <path d="M298 547 C302 620 309 690 313 728 Q315.5 751.5 328 751.5 H387" stroke-width="1.1"/>
 <path d="M499 547 C503 470 508 368.5 523 368.5 H572" stroke-width="1"/>
 <path d="M499 547 C503 480 507 393.5 522 393.5 H668" stroke-width="1"/>
 <path d="M499 547 C503 490 507 419 522 419 H680" stroke-width="1"/>
 <path d="M499 547 C502 500 506 445 521 445 H604" stroke-width="1"/>
 <path d="M499 547 C502 510 505 470.5 521 470.5 H594" stroke-width="1"/>
 <path d="M499 547 C503 620 507 700 509 712 Q512 725 526 725 H995" stroke-width="1.1"/>
</svg>
<div class="a" style="left:0px;top:136px;width:2px;height:692px;background:#f1f1f4;border-radius:0px;"></div>
<div class="a" style="left:352px;top:795.5px;width:4px;height:1.2000000000000455px;background:#666;border-radius:0px;"></div>
<div class="a" style="left:386px;top:744.5px;width:13px;height:13px;border-radius:50%;border:1px solid #666;background:#fff"></div>
<div class="t" style="left:390px;top:747.2px;font-size:8.5px;color:#555;">5</div>
<div class="a" style="left:355.5px;top:789.5px;width:13px;height:13px;border-radius:50%;border:1px solid #666;background:#fff"></div>
<div class="t" style="left:359.5px;top:792.2px;font-size:8.5px;color:#555;">2</div>
<div class="a" style="left:194px;top:529px;width:96px;height:36px;border-radius:4px;border:2px solid #555;background:#fff"></div>
<div class="t" style="left:211px;top:539.4px;font-size:15.2px;color:#333;font-weight:bold;">项目介绍</div>
<div class="a" style="left:194px;top:778px;width:158px;height:37px;border-radius:4px;border:2px solid #555;background:#fff"></div>
<div class="t" style="left:211px;top:789.4px;font-size:15.2px;color:#333;font-weight:bold;">账号注册以及养号</div>
<div class="t" style="left:332px;top:531.5px;font-size:11px;color:#333;">在咸鱼平台卖微信AI小程序工具</div>
<div class="t" style="left:532px;top:352.5px;font-size:11px;color:#333;">AI配音</div>
<div class="t" style="left:532px;top:378.0px;font-size:11px;color:#333;">视频去水印和视频文案提取</div>
<div class="t" style="left:532px;top:403.5px;font-size:11px;color:#333;">AI写作（小红书文案笔记等）</div>
<div class="t" style="left:532px;top:429.0px;font-size:11px;color:#333;">文案违规检测</div>
<div class="t" style="left:532px;top:454.5px;font-size:11px;color:#333;">抖音AI助手</div>
<div class="t" style="left:332px;top:735.5px;font-size:11px;color:#333;">项目优势</div>
<div class="a" style="left:37px;top:748px;width:28px;height:20px;border-radius:14px 14px 0 0;background:rgba(205,232,225,0.7)"></div>
<div class="a" style="left:-60px;top:757px;width:204px;height:63px;overflow:hidden"><div style="position:absolute;left:0;top:0;width:204px;height:76px;background:#fb1c08;border-radius:0 38px 38px 0"></div></div>
<div class="a" style="left:0;top:757px;width:1.5px;height:63px;background:#f4f4f6"></div>
<div class="t" style="left:-6px;top:775.5px;font-size:19px;color:#fff;font-weight:bold;">机即可操作，</div>
<div class="t" style="left:-6px;top:800.5px;font-size:19px;color:#fff;font-weight:bold;">手</div>
<div class="a" style="left:31px;top:753px;width:40px;height:40px;border-radius:50%;background:radial-gradient(circle,rgba(120,60,50,0.45) 0%,rgba(160,80,70,0.3) 50%,rgba(200,120,110,0) 100%)"></div>
<div class="a" style="left:40px;top:762px;width:22px;height:22px;border-radius:50%;background:#1d9a7c"></div>
<div class="a" style="left:45.4px;top:770.6px;width:12.100000000000001px;height:6.399999999999977px;background:#fff;border-radius:3.2px;"></div>
<div class="a" style="left:47.5px;top:772px;width:3.0px;height:3px;background:#222;border-radius:1.5px;"></div>
<div class="a" style="left:52.2px;top:772px;width:3.0px;height:3px;background:#222;border-radius:1.5px;"></div>
<!--/CANVAS-->
<!--PHONES--><div class="a" style="left:531.6px;top:478.0px;width:108.1px;height:244.0px;background:#f3f4f6;border-radius:0px;"></div>
<div class="a" style="left:531.6px;top:478.0px;width:108.1px;height:24.0px;background:#fff;border-radius:0px;"></div>
<div class="a" style="left:531.6px;top:706.0px;width:108.1px;height:16.0px;background:#fff;border-radius:0px;"></div>
<div class="a" style="left:576.6px;top:721.0px;width:50.0px;height:1.0px;background:#e0e0e4;border-radius:0px;"></div>
<div class="a" style="left:643.7px;top:478.0px;width:109.9px;height:244.0px;background:#f3f4f6;border-radius:0px;"></div>
<div class="a" style="left:643.7px;top:478.0px;width:109.9px;height:24.0px;background:#fff;border-radius:0px;"></div>
<div class="a" style="left:643.7px;top:706.0px;width:109.9px;height:16.0px;background:#fff;border-radius:0px;"></div>
<div class="a" style="left:688.7px;top:721.0px;width:50.0px;height:1.0px;background:#e0e0e4;border-radius:0px;"></div>
<div class="a" style="left:757.6px;top:478.0px;width:108.4px;height:244.0px;background:#f3f4f6;border-radius:0px;"></div>
<div class="a" style="left:757.6px;top:478.0px;width:108.4px;height:24.0px;background:#fff;border-radius:0px;"></div>
<div class="a" style="left:757.6px;top:706.0px;width:108.4px;height:16.0px;background:#fff;border-radius:0px;"></div>
<div class="a" style="left:802.6px;top:721.0px;width:50.0px;height:1.0px;background:#e0e0e4;border-radius:0px;"></div>
<div class="a" style="left:870.6px;top:478.0px;width:107.7px;height:244.0px;background:#f3f4f6;border-radius:0px;"></div>
<div class="a" style="left:870.6px;top:478.0px;width:107.7px;height:24.0px;background:#fff;border-radius:0px;"></div>
<div class="a" style="left:870.6px;top:706.0px;width:107.7px;height:16.0px;background:#fff;border-radius:0px;"></div>
<div class="a" style="left:915.6px;top:721.0px;width:50.0px;height:1.0px;background:#e0e0e4;border-radius:0px;"></div>
<div class="a" style="left:531.6px;top:502.0px;width:108.1px;height:59.6px;background:#262626;border-radius:0px;"></div>
<div class="t" style="left:531.6px;width:108.1px;text-align:center;top:507.5px;font-size:9px;color:#eee;overflow:hidden">由于近期相关规定变动</div>
<div class="t" style="left:531.6px;width:108.1px;text-align:center;top:519.9px;font-size:9.2px;color:#fff;overflow:hidden">小程序版本或将<span style="color:#ff2a2a;font-weight:bold">随时失效</span></div>
<div class="t" style="left:531.6px;width:108.1px;text-align:center;top:532.3px;font-size:9.4px;color:#fff;overflow:hidden">点击关于我们<span style="color:#ff2a2a;font-weight:bold">扫码进群</span></div>
<div class="t" style="left:531.6px;width:108.1px;text-align:center;top:544.8px;font-size:8.5px;color:#ddd;overflow:hidden">即可获取最新可用的版本</div>
<div class="a" style="left:531.6px;top:561.6px;width:108.1px;height:28.4px;background:#fff;border-radius:0px;"></div>
<div class="a" style="left:537.4px;top:567.7px;width:46.1px;height:13.7px;background:linear-gradient(90deg,#3d8af0,#5a6ee8);border-radius:1px;"></div>
<div class="a" style="left:587.8px;top:567.7px;width:46.7px;height:13.7px;background:linear-gradient(90deg,#3d8af0,#5a6ee8);border-radius:1px;"></div>
<div class="a" style="left:534.6px;top:590.0px;width:102.1px;height:116.0px;background:#fff;border-radius:3px;"></div>
<div class="a" style="left:541.0px;top:600.0px;width:11.0px;height:1.0px;background:#5aa0ee;border-radius:0px;"></div>
<div class="a" style="left:545.6px;top:609.0px;width:15.0px;height:15.0px;background:#2e2e30;border-radius:2px;"></div>
<div class="a" style="left:578.1px;top:609.0px;width:15.0px;height:15.0px;background:#2e2e30;border-radius:2px;"></div>
<div class="a" style="left:610.6px;top:609.0px;width:15.0px;height:15.0px;background:#2e2e30;border-radius:2px;"></div>
<div class="a" style="left:545.6px;top:641.7px;width:15.0px;height:15.0px;background:#2e2e30;border-radius:2px;"></div>
<div class="a" style="left:578.1px;top:641.7px;width:15.0px;height:15.0px;background:#2e2e30;border-radius:2px;"></div>
<div class="a" style="left:610.6px;top:641.7px;width:15.0px;height:15.0px;background:#2e2e30;border-radius:2px;"></div>
<div class="a" style="left:545.6px;top:674.4px;width:15.0px;height:15.0px;background:#2e2e30;border-radius:2px;"></div>
<div class="a" style="left:578.1px;top:674.4px;width:15.0px;height:15.0px;background:#2e2e30;border-radius:2px;"></div>
<div class="a" style="left:610.6px;top:674.4px;width:15.0px;height:15.0px;background:#2e2e30;border-radius:2px;"></div>
<div class="a" style="left:648.7px;top:515.8px;width:100.9px;height:23.8px;background:#fff;border-radius:2px;"></div>
<div class="a" style="left:648.0px;top:552.4px;width:73.5px;height:13.8px;background:linear-gradient(90deg,#3aa0f8,#6a60e8);border-radius:7px;"></div>
<div class="a" style="left:725.0px;top:552.4px;width:25.0px;height:13.8px;background:linear-gradient(90deg,#3aa0f8,#6a60e8);border-radius:7px;"></div>
<div class="a" style="left:740px;top:568px;width:9px;height:9px;border-radius:50%;border:1px solid #8cc0f0"></div>
<div class="a" style="left:762.0px;top:515.8px;width:99.0px;height:51.9px;background:#fff;border-radius:2px;"></div>
<div class="a" style="left:845.0px;top:573.0px;width:13.0px;height:5.0px;background:#fff;border-radius:3px;"></div>
<div class="a" style="left:762.0px;top:605.5px;width:49.0px;height:1.5px;background:#5aa8f0;border-radius:0px;"></div>
<div class="a" style="left:811.0px;top:606.0px;width:50.0px;height:1.0px;background:#e0e0e4;border-radius:0px;"></div>
<div class="a" style="left:807px;top:602px;width:9px;height:9px;border-radius:50%;background:#fff;border:1px solid #ddd"></div>
<div class="a" style="left:761.0px;top:619.6px;width:101.0px;height:12.8px;background:linear-gradient(90deg,#3aa0f8,#6a60e8);border-radius:7px;"></div>
<div class="a" style="left:762.0px;top:646.4px;width:99.0px;height:38.8px;background:#fff;border-radius:2px;"></div>
<div class="a" style="left:764.0px;top:665.0px;width:5.0px;height:1.0px;background:#5aa8f0;border-radius:0px;"></div>
<div class="a" style="left:874.0px;top:522.0px;width:101.0px;height:22.0px;background:#fff;border-radius:2px;"></div>
<div class="a" style="left:874.0px;top:558.0px;width:73.0px;height:12.7px;background:linear-gradient(90deg,#3aa0f8,#6a60e8);border-radius:7px;"></div>
<div class="a" style="left:951.0px;top:558.0px;width:24.0px;height:12.7px;background:linear-gradient(90deg,#3aa0f8,#6a60e8);border-radius:7px;"></div>
<div class="a" style="left:966px;top:574px;width:9px;height:9px;border-radius:50%;border:1px solid #8cc0f0"></div>
<svg style="left:0;top:0" width="1000" height="740" viewBox="0 0 1000 740" font-family="Liberation Sans, sans-serif"><text x="537.6" y="484.8" font-size="4" fill="#888" textLength="8.0" lengthAdjust="spacingAndGlyphs">11:47 ✈</text><rect x="613.7" y="481.5" width="5" height="3" fill="#bbb"/><rect x="620.7" y="481.5" width="4" height="3" fill="#bbb"/><rect x="626.7" y="481.5" width="6" height="3" rx="0.8" fill="#999"/><text x="574.2" y="497.4" font-size="4.8" fill="#777" textLength="23.0" lengthAdjust="spacingAndGlyphs">AI工作台</text><rect x="615.7" y="495" width="5" height="1.2" fill="#666"/><circle cx="630.2" cy="495.5" r="2.8" fill="#888"/><circle cx="630.2" cy="495.5" r="1" fill="#ddd"/><rect x="541.1" y="709" width="7" height="6" rx="1.2" fill="none" stroke="#5aa8f0" stroke-width="0.9"/><text x="544.6" y="720.3" font-size="3.4" fill="#5aa8f0" text-anchor="middle">AI工作台</text><rect x="568.5" y="709" width="7" height="6" rx="1.2" fill="none" stroke="#b8b8bc" stroke-width="0.9"/><text x="572.0" y="720.3" font-size="3.4" fill="#999" text-anchor="middle">视频去水印</text><rect x="595.8" y="709" width="7" height="6" rx="1.2" fill="none" stroke="#b8b8bc" stroke-width="0.9"/><text x="599.3" y="720.3" font-size="3.4" fill="#999" text-anchor="middle">在线配音</text><rect x="623.2" y="709" width="7" height="6" rx="1.2" fill="none" stroke="#b8b8bc" stroke-width="0.9"/><text x="626.7" y="720.3" font-size="3.4" fill="#999" text-anchor="middle">视频文案提取</text><text x="649.7" y="484.8" font-size="4" fill="#888" textLength="8.0" lengthAdjust="spacingAndGlyphs">11:47 ✈</text><rect x="727.6" y="481.5" width="5" height="3" fill="#bbb"/><rect x="734.6" y="481.5" width="4" height="3" fill="#bbb"/><rect x="740.6" y="481.5" width="6" height="3" rx="0.8" fill="#999"/><text x="687.2" y="497.4" font-size="4.8" fill="#777" textLength="23.0" lengthAdjust="spacingAndGlyphs">在线去水印</text><rect x="729.6" y="495" width="5" height="1.2" fill="#666"/><circle cx="744.1" cy="495.5" r="2.8" fill="#888"/><circle cx="744.1" cy="495.5" r="1" fill="#ddd"/><rect x="653.2" y="709" width="7" height="6" rx="1.2" fill="none" stroke="#b8b8bc" stroke-width="0.9"/><text x="656.7" y="720.3" font-size="3.4" fill="#999" text-anchor="middle">AI工作台</text><rect x="681.2" y="709" width="7" height="6" rx="1.2" fill="none" stroke="#5aa8f0" stroke-width="0.9"/><text x="684.7" y="720.3" font-size="3.4" fill="#5aa8f0" text-anchor="middle">视频去水印</text><rect x="709.1" y="709" width="7" height="6" rx="1.2" fill="none" stroke="#b8b8bc" stroke-width="0.9"/><text x="712.6" y="720.3" font-size="3.4" fill="#999" text-anchor="middle">在线配音</text><rect x="737.1" y="709" width="7" height="6" rx="1.2" fill="none" stroke="#b8b8bc" stroke-width="0.9"/><text x="740.6" y="720.3" font-size="3.4" fill="#999" text-anchor="middle">视频文案提取</text><text x="763.6" y="484.8" font-size="4" fill="#888" textLength="8.0" lengthAdjust="spacingAndGlyphs">11:47 ✈</text><rect x="840.0" y="481.5" width="5" height="3" fill="#bbb"/><rect x="847.0" y="481.5" width="4" height="3" fill="#bbb"/><rect x="853.0" y="481.5" width="6" height="3" rx="0.8" fill="#999"/><text x="802.6" y="497.4" font-size="4.8" fill="#777" textLength="18.4" lengthAdjust="spacingAndGlyphs">在线配音</text><rect x="842.0" y="495" width="5" height="1.2" fill="#666"/><circle cx="856.5" cy="495.5" r="2.8" fill="#888"/><circle cx="856.5" cy="495.5" r="1" fill="#ddd"/><rect x="767.1" y="709" width="7" height="6" rx="1.2" fill="none" stroke="#b8b8bc" stroke-width="0.9"/><text x="770.6" y="720.3" font-size="3.4" fill="#999" text-anchor="middle">AI工作台</text><rect x="794.6" y="709" width="7" height="6" rx="1.2" fill="none" stroke="#b8b8bc" stroke-width="0.9"/><text x="798.1" y="720.3" font-size="3.4" fill="#999" text-anchor="middle">视频去水印</text><rect x="822.0" y="709" width="7" height="6" rx="1.2" fill="none" stroke="#5aa8f0" stroke-width="0.9"/><text x="825.5" y="720.3" font-size="3.4" fill="#5aa8f0" text-anchor="middle">在线配音</text><rect x="849.5" y="709" width="7" height="6" rx="1.2" fill="none" stroke="#b8b8bc" stroke-width="0.9"/><text x="853.0" y="720.3" font-size="3.4" fill="#999" text-anchor="middle">视频文案提取</text><text x="876.6" y="484.8" font-size="4" fill="#888" textLength="8.0" lengthAdjust="spacingAndGlyphs">11:47 ✈</text><rect x="952.3" y="481.5" width="5" height="3" fill="#bbb"/><rect x="959.3" y="481.5" width="4" height="3" fill="#bbb"/><rect x="965.3" y="481.5" width="6" height="3" rx="0.8" fill="#999"/><text x="910.7" y="497.4" font-size="4.8" fill="#777" textLength="27.6" lengthAdjust="spacingAndGlyphs">视频文案提取</text><rect x="954.3" y="495" width="5" height="1.2" fill="#666"/><circle cx="968.8" cy="495.5" r="2.8" fill="#888"/><circle cx="968.8" cy="495.5" r="1" fill="#ddd"/><rect x="880.1" y="709" width="7" height="6" rx="1.2" fill="none" stroke="#b8b8bc" stroke-width="0.9"/><text x="883.6" y="720.3" font-size="3.4" fill="#999" text-anchor="middle">AI工作台</text><rect x="907.3" y="709" width="7" height="6" rx="1.2" fill="none" stroke="#b8b8bc" stroke-width="0.9"/><text x="910.8" y="720.3" font-size="3.4" fill="#999" text-anchor="middle">视频去水印</text><rect x="934.6" y="709" width="7" height="6" rx="1.2" fill="none" stroke="#b8b8bc" stroke-width="0.9"/><text x="938.1" y="720.3" font-size="3.4" fill="#999" text-anchor="middle">在线配音</text><rect x="961.8" y="709" width="7" height="6" rx="1.2" fill="none" stroke="#5aa8f0" stroke-width="0.9"/><text x="965.3" y="720.3" font-size="3.4" fill="#5aa8f0" text-anchor="middle">视频文案提取</text><text x="541.0" y="598.4" font-size="4.2" fill="#5a9ae8" textLength="15.0" lengthAdjust="spacingAndGlyphs">文案热榜</text><text x="562.0" y="598.4" font-size="4.2" fill="#888" textLength="15.0" lengthAdjust="spacingAndGlyphs">32专区</text><text x="584.0" y="598.4" font-size="4.2" fill="#888" textLength="28.0" lengthAdjust="spacingAndGlyphs">抖音AI助手大全</text><text x="627.0" y="598.4" font-size="4.2" fill="#888" textLength="10.0" lengthAdjust="spacingAndGlyphs">CHZ</text><text x="545.0" y="576.0" font-size="4" fill="#dde8ff" textLength="30.0" lengthAdjust="spacingAndGlyphs">⎙ 在线教程</text><text x="595.0" y="576.0" font-size="4" fill="#dde8ff" textLength="30.0" lengthAdjust="spacingAndGlyphs">◎ 关于我们</text><text x="547.1" y="615.2" font-size="3.2" fill="#eee" textLength="12.0" lengthAdjust="spacingAndGlyphs" font-weight="bold">文案改写</text><rect x="548.6" y="618.0" width="9" height="1.2" fill="#c04050"/><text x="543.6" y="631.4" font-size="3.6" fill="#999" textLength="19.0" lengthAdjust="spacingAndGlyphs">小程序文字转</text><text x="579.6" y="615.2" font-size="3.2" fill="#eee" textLength="12.0" lengthAdjust="spacingAndGlyphs" font-weight="bold">文案改写</text><rect x="581.1" y="618.0" width="9" height="1.2" fill="#c04050"/><text x="576.1" y="631.4" font-size="3.6" fill="#999" textLength="19.0" lengthAdjust="spacingAndGlyphs">文案去除</text><text x="612.1" y="615.2" font-size="3.2" fill="#eee" textLength="12.0" lengthAdjust="spacingAndGlyphs" font-weight="bold">文案改写</text><rect x="613.6" y="618.0" width="9" height="1.2" fill="#c04050"/><text x="608.6" y="631.4" font-size="3.6" fill="#999" textLength="19.0" lengthAdjust="spacingAndGlyphs">爆款内容创作</text><text x="547.1" y="647.9" font-size="3.2" fill="#eee" textLength="12.0" lengthAdjust="spacingAndGlyphs" font-weight="bold">文案改写</text><rect x="548.6" y="650.7" width="9" height="1.2" fill="#c04050"/><text x="543.6" y="664.1" font-size="3.6" fill="#999" textLength="19.0" lengthAdjust="spacingAndGlyphs">小说改写</text><text x="579.6" y="647.9" font-size="3.2" fill="#eee" textLength="12.0" lengthAdjust="spacingAndGlyphs" font-weight="bold">文案改写</text><rect x="581.1" y="650.7" width="9" height="1.2" fill="#c04050"/><text x="576.1" y="664.1" font-size="3.6" fill="#999" textLength="19.0" lengthAdjust="spacingAndGlyphs">种草文案一</text><text x="612.1" y="647.9" font-size="3.2" fill="#eee" textLength="12.0" lengthAdjust="spacingAndGlyphs" font-weight="bold">文案改写</text><rect x="613.6" y="650.7" width="9" height="1.2" fill="#c04050"/><text x="608.6" y="664.1" font-size="3.6" fill="#999" textLength="19.0" lengthAdjust="spacingAndGlyphs">文案去重</text><text x="547.1" y="680.6" font-size="3.2" fill="#eee" textLength="12.0" lengthAdjust="spacingAndGlyphs" font-weight="bold">文案改写</text><rect x="548.6" y="683.4" width="9" height="1.2" fill="#c04050"/><text x="543.6" y="696.8" font-size="3.6" fill="#999" textLength="19.0" lengthAdjust="spacingAndGlyphs">文案提取一</text><text x="579.6" y="680.6" font-size="3.2" fill="#eee" textLength="12.0" lengthAdjust="spacingAndGlyphs" font-weight="bold">文案改写</text><rect x="581.1" y="683.4" width="9" height="1.2" fill="#c04050"/><text x="576.1" y="696.8" font-size="3.6" fill="#999" textLength="19.0" lengthAdjust="spacingAndGlyphs">都市改写</text><text x="612.1" y="680.6" font-size="3.2" fill="#eee" textLength="12.0" lengthAdjust="spacingAndGlyphs" font-weight="bold">文案改写</text><rect x="613.6" y="683.4" width="9" height="1.2" fill="#c04050"/><text x="608.6" y="696.8" font-size="3.6" fill="#999" textLength="19.0" lengthAdjust="spacingAndGlyphs">抖小红书改写</text><text x="649.7" y="510.1" font-size="4.2" fill="#5a9ae8" textLength="93.9" lengthAdjust="spacingAndGlyphs">ⓘ 视频去水印和文案提取，请使用下方的分享链接进行操作!</text><text x="652.7" y="522.5" font-size="4" fill="#b8b8bc" textLength="50.0" lengthAdjust="spacingAndGlyphs">长按粘贴视频分享链接在此处</text><text x="649.7" y="546.9" font-size="3.8" fill="#666" textLength="26.0" lengthAdjust="spacingAndGlyphs">◎ 请先去去水印教程</text><text x="731.6" y="546.9" font-size="3.8" fill="#666" textLength="18.0" lengthAdjust="spacingAndGlyphs">◉ 清空链接</text><text x="672.0" y="560.9" font-size="4.2" fill="#e8f0ff" textLength="25.0" lengthAdjust="spacingAndGlyphs">⟲ 立即解析</text><text x="731.0" y="560.9" font-size="4.2" fill="#e8f0ff" textLength="13.0" lengthAdjust="spacingAndGlyphs">▯ 粘贴</text><text x="649.7" y="575.4" font-size="3.8" fill="#666" textLength="26.0" lengthAdjust="spacingAndGlyphs">◎ 暂无解析结果</text><text x="763.6" y="510.1" font-size="4.2" fill="#5a9ae8" textLength="92.4" lengthAdjust="spacingAndGlyphs">ⓘ 单次合成上传不超过500个字，超过500时请分多段配置。</text><text x="766.0" y="522.5" font-size="4" fill="#b8b8bc" textLength="22.0" lengthAdjust="spacingAndGlyphs">输入你的文本...</text><text x="762.0" y="577.2" font-size="4.4" fill="#444" textLength="42.0" lengthAdjust="spacingAndGlyphs" font-weight="bold">▼ 使用高级功能(Pro)</text><text x="762.0" y="585.0" font-size="4" fill="#555" textLength="24.0" lengthAdjust="spacingAndGlyphs">☰ 当前文本长度</text><text x="834.6" y="585.0" font-size="4" fill="#555" textLength="26.4" lengthAdjust="spacingAndGlyphs">◔ 0/1000</text><text x="762.0" y="592.5" font-size="4" fill="#555" textLength="24.0" lengthAdjust="spacingAndGlyphs">◎ 角色  语音库...</text><text x="834.6" y="592.5" font-size="4" fill="#555" textLength="26.4" lengthAdjust="spacingAndGlyphs">◌ 选择配音角色</text><text x="762.0" y="600.0" font-size="4" fill="#555" textLength="24.0" lengthAdjust="spacingAndGlyphs">◎ 速率  0%</text><text x="847.8" y="600.0" font-size="4" fill="#555" textLength="13.2" lengthAdjust="spacingAndGlyphs">↻ 重置</text><text x="762.0" y="615.0" font-size="4" fill="#555" textLength="22.0" lengthAdjust="spacingAndGlyphs">◎ 请先去教程</text><text x="844.0" y="615.0" font-size="4" fill="#555" textLength="17.0" lengthAdjust="spacingAndGlyphs">◉ 清空内容</text><text x="797.0" y="627.7" font-size="4.4" fill="#e8f0ff" textLength="28.0" lengthAdjust="spacingAndGlyphs">◁ 立即生成语音</text><text x="762.0" y="641.0" font-size="4" fill="#555" textLength="18.0" lengthAdjust="spacingAndGlyphs">◎ 配音示例</text><text x="776.0" y="653.4" font-size="3.8" fill="#444" textLength="72.0" lengthAdjust="spacingAndGlyphs">在文字合成区，以文字合成最新的内容，用语音</text><text x="776.0" y="658.9" font-size="3.8" fill="#444" textLength="72.0" lengthAdjust="spacingAndGlyphs">和达服务双方代表的"语言库"，以文字合成</text><text x="776.0" y="664.4" font-size="3.8" fill="#444" textLength="72.0" lengthAdjust="spacingAndGlyphs">最新稿，其中用户按付费已的代理的"轮号</text><text x="776.0" y="669.9" font-size="3.8" fill="#444" textLength="72.0" lengthAdjust="spacingAndGlyphs">"服务业务，不以权限，有在线服务以后提供</text><text x="776.0" y="675.4" font-size="3.8" fill="#444" textLength="72.0" lengthAdjust="spacingAndGlyphs">服务按照内容，文字语音服务优化开展服务</text><text x="776.0" y="680.9" font-size="3.8" fill="#444" textLength="56.0" lengthAdjust="spacingAndGlyphs">为文字语音商业方式服务的气息。</text><text x="762.0" y="694.0" font-size="4" fill="#555" textLength="26.0" lengthAdjust="spacingAndGlyphs">◎ 暂无合成结果</text><text x="876.6" y="510.1" font-size="4.2" fill="#5a9ae8" textLength="93.7" lengthAdjust="spacingAndGlyphs">ⓘ 由于视频链接变化为文件，解析时间较长约1分钟左右，请耐心</text><text x="876.6" y="515.6" font-size="4.2" fill="#5a9ae8" textLength="57.7" lengthAdjust="spacingAndGlyphs">等，及时刷新链接。</text><text x="918.6" y="515.6" font-size="4.2" fill="#e05040" textLength="40.0" lengthAdjust="spacingAndGlyphs">(以实际时间为准)</text><text x="878.0" y="528.5" font-size="4" fill="#b8b8bc" textLength="42.0" lengthAdjust="spacingAndGlyphs">长按粘贴视频分享链接...</text><text x="874.0" y="552.9" font-size="3.8" fill="#666" textLength="30.0" lengthAdjust="spacingAndGlyphs">◎ 请先去去水印教程</text><text x="956.0" y="552.9" font-size="3.8" fill="#666" textLength="19.0" lengthAdjust="spacingAndGlyphs">◉ 清空链接</text><text x="896.0" y="566.1" font-size="4.2" fill="#e8f0ff" textLength="30.0" lengthAdjust="spacingAndGlyphs">⟲ 立即提取文案</text><text x="956.0" y="566.1" font-size="4.2" fill="#e8f0ff" textLength="13.0" lengthAdjust="spacingAndGlyphs">▯ 粘贴</text><text x="874.0" y="580.9" font-size="3.8" fill="#5a9ae8" textLength="26.0" lengthAdjust="spacingAndGlyphs">◎ 暂无提取结果</text></svg>
<div class="a" style="left:590.0px;top:821.0px;width:759.0px;height:6.5px;background:#cdcdd0;border-radius:3.5px;"></div>
<div class="a" style="left:1350.0px;top:322.0px;width:7.0px;height:256.0px;background:#cdcdd0;border-radius:3.5px;"></div>
<svg style="left:491px;top:625px" width="13" height="20" viewBox="0 0 13 20"><path d="M0.5 0.5 L0.5 16 L4 12.5 L6.5 18.5 L9 17.5 L6.5 11.5 L11.5 11.5 Z" fill="#fff" stroke="#222" stroke-width="1" stroke-linejoin="round"/></svg>
<!--/PHONES-->






































<div id="panel" class="a"></div>
<div id="status" class="a"></div>
<!--PANEL--><div class="a" style="left:0;top:117px;width:90px;height:19px;background:#fff"></div>
<svg style="left:7px;top:121px" width="10" height="11" viewBox="0 0 10 11"><path d="M2 0.5h4l3 3v7h-7z" fill="#3dbf8c"/><rect x="2" y="6" width="7" height="4.5" fill="#27a07a"/></svg>
<div class="t" style="left:25px;top:121px;font-size:10.5px;color:#444">导图2</div>
<div class="a" style="left:72.5px;top:122.5px;width:7.5px;height:7.5px;border-radius:50%;background:#666"></div>
<svg style="left:95px;top:121px" width="11" height="11" viewBox="0 0 11 11" stroke="#333" stroke-width="1.3"><path d="M5.5 0.5v10M0.5 5.5h10"/></svg>
<div class="a" style="left:1531px;top:117px;width:51px;height:19px;background:#f5f5f8;border-left:1px solid #e6e6ea"></div>
<svg style="left:1539px;top:120px" width="14" height="12" viewBox="0 0 14 12" fill="none" stroke="#444" stroke-width="1"><rect x="0.5" y="1.5" width="12" height="9"/><path d="M8.5 1.5v9"/></svg>
<div class="t" style="left:1557px;top:121px;font-size:10.5px;color:#333">面板</div>
<div class="a" style="left:1358px;top:136px;width:44px;height:34px;background:#d9eee6"></div>
<div class="a" style="left:1358px;top:167px;width:44px;height:3px;background:#16a07a"></div>
<div class="a" style="left:1402px;top:169px;width:180px;height:1px;background:#e6e6ea"></div>
<svg style="left:1371px;top:144px" width="20" height="20" viewBox="0 0 20 20" fill="none" stroke="#17a07a" stroke-width="1.6"><rect x="2" y="2" width="16" height="16" rx="4"/><rect x="6" y="7" width="8" height="6" rx="1.5"/></svg>
<svg style="left:1414px;top:143px" width="22" height="22" viewBox="0 0 22 22" fill="none" stroke="#222" stroke-width="1.5" stroke-linejoin="round"><path d="M10.5 3.5 Q12 9 17.5 10.5 Q12 12 10.5 17.5 Q9 12 3.5 10.5 Q9 9 10.5 3.5z"/><path d="M3.5 1.2 Q3.9 3 5.6 3.4 Q3.9 3.8 3.5 5.6 Q3.1 3.8 1.4 3.4 Q3.1 3 3.5 1.2z M17 15.5 Q17.4 17.3 19.1 17.7 Q17.4 18.1 17 19.9 Q16.6 18.1 14.9 17.7 Q16.6 17.3 17 15.5z" fill="#222" stroke-width="0.6"/></svg>
<svg style="left:1459px;top:144px" width="20" height="20" viewBox="0 0 20 20" fill="none" stroke="#222" stroke-width="1.5"><path d="M10 18C6.5 15 3.2 12 3.2 8.8a6.8 6.8 0 0 1 13.6 0C16.8 12 13.5 15 10 18z"/><path d="M7.3 9.6q2.7 2.6 5.4 0"/><path d="M7.6 6.8v1.2M12.4 6.8v1.2"/></svg>
<svg style="left:1503px;top:143.5px" width="21" height="21" viewBox="0 0 21 21" fill="none" stroke="#222" stroke-width="1.5" stroke-linejoin="round"><path d="M7.56 6.45 A3 3 0 1 1 13.44 6.45 A3 3 0 1 1 15.26 12.05 A3 3 0 1 1 10.50 15.50 A3 3 0 1 1 5.74 12.05 A3 3 0 1 1 7.56 6.45"/><circle cx="10.5" cy="10.8" r="2.2"/></svg>
<svg style="left:1548px;top:143.5px" width="20" height="20" viewBox="0 0 20 20" fill="none" stroke="#555" stroke-width="1.5"><path d="M10 2.5a7.5 7.5 0 0 0 0 15"/><path d="M10 2.5a7.5 7.5 0 0 1 0 15" stroke-dasharray="1.6 2.4"/><path d="M9.5 6.5v4h3"/></svg>
<div class="t" style="left:1370px;top:183.5px;font-size:11px;color:#222;font-weight:bold;">布局</div>
<div class="t" style="left:1370px;top:222.0px;font-size:10px;color:#333;">布局</div>
<div class="a" style="left:1497px;top:207px;width:71px;height:39px;border-radius:6px;background:#fff;border:1px solid #e8e8ec"></div>
<svg style="left:1507px;top:218px" width="18" height="16" viewBox="0 0 18 16" fill="#333"><rect x="1" y="1" width="4" height="3" rx="0.6"/><rect x="13" y="1" width="4" height="3" rx="0.6"/><rect x="1" y="12" width="4" height="3" rx="0.6"/><rect x="13" y="12" width="4" height="3" rx="0.6"/><rect x="7" y="6.5" width="4" height="3" rx="0.6"/><path d="M5 2.5h8M5 13.5h8M9 2.5v11" stroke="#333" stroke-width="0.8" fill="none"/></svg>
<svg style="left:1553px;top:224.5px" width="8" height="5" viewBox="0 0 8 5" fill="none" stroke="#444" stroke-width="1.3"><path d="M0.8 0.8l3.2 3.2l3.2-3.2"/></svg>
<div class="t" style="left:1370px;top:263.0px;font-size:10px;color:#333;">主题间距</div>
<div class="t" style="left:1370px;top:294.0px;font-size:10px;color:#333;">水平</div>
<div class="a" style="left:1396px;top:289px;width:44px;height:19px;border-radius:5px;background:#fff;border:1px solid #e8e8ec"></div>
<div class="t" style="left:1402px;top:294.0px;font-size:10px;color:#333;">30</div>
<div class="t" style="left:1498px;top:294.0px;font-size:10px;color:#333;">垂直</div>
<div class="a" style="left:1523px;top:289px;width:45px;height:19px;border-radius:5px;background:#fff;border:1px solid #e8e8ec"></div>
<div class="t" style="left:1529px;top:294.0px;font-size:10px;color:#333;">30</div>
<svg style="left:1430px;top:292px" width="6" height="14" viewBox="0 0 6 14" fill="#333"><path d="M0.5 4l2.5-3l2.5 3z"/><path d="M0.5 10l2.5 3l2.5-3z"/></svg>
<div class="a" style="left:1427px;top:292px;width:1px;height:13px;background:#eee"></div>
<svg style="left:1558px;top:292px" width="6" height="14" viewBox="0 0 6 14" fill="#333"><path d="M0.5 4l2.5-3l2.5 3z"/><path d="M0.5 10l2.5 3l2.5-3z"/></svg>
<div class="a" style="left:1555px;top:292px;width:1px;height:13px;background:#eee"></div>
<div class="a" style="left:1371px;top:323.5px;width:11px;height:11px;border-radius:2px;background:#fff;border:1px solid #d8d8dc"></div>
<div class="t" style="left:1387px;top:324.0px;font-size:10px;color:#333;">分支自由布局</div>
<div class="a" style="left:1371px;top:350.0px;width:11px;height:11px;border-radius:2px;background:#fff;border:1px solid #d8d8dc"></div>
<div class="t" style="left:1387px;top:350.5px;font-size:10px;color:#333;">同级主题对齐</div>
<div class="a" style="left:1371px;top:375.5px;width:11px;height:11px;border-radius:2px;background:#fff;border:1px solid #d8d8dc"></div>
<div class="t" style="left:1387px;top:376.0px;font-size:10px;color:#333;">灵活浮动主题</div>
<div class="a" style="left:1371px;top:401.5px;width:11px;height:11px;border-radius:2px;background:#fff;border:1px solid #d8d8dc"></div>
<div class="t" style="left:1387px;top:402.0px;font-size:10px;color:#333;">主题层叠</div>
<div class="a" style="left:1370px;top:426px;width:212px;height:1px;background:#e4e4e8"></div>
<div class="t" style="left:1370px;top:439.5px;font-size:11px;color:#222;font-weight:bold;">主题风格</div>
<div class="t" style="left:1370px;top:478.0px;font-size:10px;color:#333;">主题风格</div>
<div class="a" style="left:1497px;top:463px;width:71px;height:39px;border-radius:6px;background:#fff;border:1px solid #e8e8ec"></div>
<svg style="left:1507px;top:473px" width="36" height="20" viewBox="0 0 36 20" fill="none" stroke="#a8b8b0" stroke-width="0.9"><rect x="1" y="7" width="10" height="6" rx="3" fill="#17a05a" stroke="none"/><path d="M11 10h3M14 10Q14 4 17 4M14 10Q14 16 17 16M14 10h3"/><rect x="17" y="2" width="7" height="4" rx="1.5"/><rect x="17" y="8" width="7" height="4" rx="1.5"/><rect x="17" y="14" width="7" height="4" rx="1.5"/><path d="M24 4h3M24 16h3" /><rect x="27" y="2.5" width="6" height="3" rx="1" stroke="#7cc8a8"/><rect x="27" y="14.5" width="6" height="3" rx="1"/></svg>
<svg style="left:1553px;top:480.5px" width="8" height="5" viewBox="0 0 8 5" fill="none" stroke="#444" stroke-width="1.3"><path d="M0.8 0.8l3.2 3.2l3.2-3.2"/></svg>
<div class="t" style="left:1370px;top:521.0px;font-size:10px;color:#333;">彩虹色</div>
<div class="a" style="left:1464px;top:514px;width:23px;height:23px;border-radius:4px;background:#eef0f0;border:1px solid #cfd4d6"></div>
<svg style="left:1466.5px;top:517px" width="18" height="18" viewBox="0 0 18 18"><rect x="0.7" y="0.7" width="16.6" height="16.6" rx="2" fill="#fff" stroke="#555" stroke-width="1.4"/><rect x="3" y="3" width="5.5" height="3.5" fill="#17a089"/><rect x="9.5" y="3" width="5.5" height="3.5" fill="#17a089"/><rect x="3" y="7.3" width="5.5" height="3.5" fill="#17a089"/><rect x="9.5" y="7.3" width="5.5" height="3.5" fill="#17a089"/><rect x="3" y="11.5" width="5.5" height="3.5" fill="#17a089"/><rect x="9.5" y="11.5" width="5.5" height="3.5" fill="#17a089"/></svg>
<svg style="left:1492px;top:517px" width="18" height="18" viewBox="0 0 18 18"><rect x="0.7" y="0.7" width="16.6" height="16.6" rx="2" fill="#fff" stroke="#555" stroke-width="1.4"/><rect x="3" y="3" width="5.5" height="3.5" fill="#f0c850"/><rect x="9.5" y="3" width="5.5" height="3.5" fill="#8b6fd0"/><rect x="3" y="7.3" width="5.5" height="3.5" fill="#f0c850"/><rect x="9.5" y="7.3" width="5.5" height="3.5" fill="#8b6fd0"/><rect x="3" y="11.5" width="5.5" height="3.5" fill="#f08a5a"/><rect x="9.5" y="11.5" width="5.5" height="3.5" fill="#a8a0e8"/></svg>
<svg style="left:1517.5px;top:517px" width="18" height="18" viewBox="0 0 18 18"><rect x="0.7" y="0.7" width="16.6" height="16.6" rx="2" fill="#fff" stroke="#555" stroke-width="1.4"/><rect x="3" y="3" width="5.5" height="3.5" fill="#17a089"/><rect x="9.5" y="3" width="5.5" height="3.5" fill="#17a089"/><rect x="3" y="7.3" width="5.5" height="3.5" fill="#f07a30"/><rect x="9.5" y="7.3" width="5.5" height="3.5" fill="#f07a30"/><rect x="3" y="11.5" width="5.5" height="3.5" fill="#4a90e2"/><rect x="9.5" y="11.5" width="5.5" height="3.5" fill="#4a90e2"/></svg>
<svg style="left:1543px;top:517px" width="18" height="18" viewBox="0 0 18 18"><rect x="0.7" y="0.7" width="16.6" height="16.6" rx="2" fill="#fff" stroke="#555" stroke-width="1.4"/><rect x="3" y="3" width="5.5" height="3.5" fill="#4a90e2"/><rect x="9.5" y="3" width="5.5" height="3.5" fill="#4a90e2"/><rect x="3" y="7.3" width="5.5" height="3.5" fill="#17a089"/><rect x="9.5" y="7.3" width="5.5" height="3.5" fill="#17a089"/><rect x="3" y="11.5" width="5.5" height="3.5" fill="#4a90e2"/><rect x="9.5" y="11.5" width="5.5" height="3.5" fill="#4a90e2"/></svg>
<div class="t" style="left:1370px;top:555.0px;font-size:10px;color:#333;">主题色</div>
<div class="a" style="left:1463px;top:549px;width:105px;height:23px;border-radius:6px;background:#fff;border:1px solid #e8e8ec"></div>
<div class="a" style="left:1469.5px;top:556px;width:7.7px;height:7px;background:#5b8def"></div>
<div class="a" style="left:1477.2px;top:556px;width:7.7px;height:7px;background:#5e9cf0"></div>
<div class="a" style="left:1484.9px;top:556px;width:7.7px;height:7px;background:#c27fb0"></div>
<div class="a" style="left:1492.6px;top:556px;width:7.7px;height:7px;background:#ee7355"></div>
<div class="a" style="left:1500.3px;top:556px;width:7.7px;height:7px;background:#6f6fc0"></div>
<div class="a" style="left:1508.0px;top:556px;width:7.7px;height:7px;background:#f3a52a"></div>
<div class="a" style="left:1515.7px;top:556px;width:7.7px;height:7px;background:#4aa0dc"></div>
<div class="a" style="left:1523.4px;top:556px;width:7.7px;height:7px;background:#0f8a50"></div>
<div class="a" style="left:1531.1px;top:556px;width:7.7px;height:7px;background:#ef8a8a"></div>
<div class="a" style="left:1538.8px;top:556px;width:7.7px;height:7px;background:#49bdb5"></div>
<svg style="left:1553px;top:557.5px" width="8" height="5" viewBox="0 0 8 5" fill="none" stroke="#444" stroke-width="1.3"><path d="M0.8 0.8l3.2 3.2l3.2-3.2"/></svg>
<div class="t" style="left:1370px;top:588.0px;font-size:10px;color:#333;">全局字体</div>
<div class="a" style="left:1463px;top:582px;width:105px;height:22px;border-radius:6px;background:#fff;border:1px solid #e8e8ec"></div>
<div class="t" style="left:1469px;top:589.5px;font-size:7px;color:#333;">Aa</div>
<div class="t" style="left:1481px;top:588.0px;font-size:10px;color:#222;">微软雅黑 (大)</div>
<svg style="left:1553px;top:590.5px" width="8" height="5" viewBox="0 0 8 5" fill="none" stroke="#444" stroke-width="1.3"><path d="M0.8 0.8l3.2 3.2l3.2-3.2"/></svg>
<div class="a" style="left:1371px;top:619.5px;width:11px;height:11px;border-radius:2px;background:#fff;border:1px solid #d8d8dc"></div>
<div class="t" style="left:1387px;top:620.0px;font-size:10px;color:#333;">手绘效果</div>
<div class="a" style="left:1370px;top:644px;width:212px;height:1px;background:#e4e4e8"></div>
<div class="t" style="left:1370px;top:657.5px;font-size:11px;color:#222;font-weight:bold;">背景</div>
<div class="a" style="left:1371px;top:684px;width:197px;height:46px;border-radius:8px;background:#fff;border:1px solid #e8e8ec"></div>
<div class="a" style="left:1375px;top:688px;width:44px;height:37px;border-radius:5px;background:#dcf0e8"></div>
<svg style="left:1389px;top:691px" width="14" height="14" viewBox="0 0 14 14" fill="none" stroke="#333" stroke-width="1.3"><rect x="0.8" y="0.8" width="12.4" height="12.4" rx="2"/><path d="M12 2L2 12"/></svg>
<svg style="left:1438px;top:691px" width="14" height="14" viewBox="0 0 14 14"><rect x="0.8" y="0.8" width="12.4" height="12.4" rx="2" fill="#fff" stroke="#333" stroke-width="1.3"/><rect x="3" y="3" width="8" height="8" rx="1" fill="#17a07a"/></svg>
<svg style="left:1486px;top:691px" width="14" height="14" viewBox="0 0 14 14"><rect x="0.8" y="0.8" width="12.4" height="12.4" rx="2" fill="#fff" stroke="#333" stroke-width="1.3"/><rect x="3" y="3" width="8" height="8" rx="1" fill="#8fd6b6"/><path d="M4 10l5-6M6 11l4-5" stroke="#fff" stroke-width="0.8"/></svg>
<svg style="left:1535px;top:691px" width="14" height="14" viewBox="0 0 14 14" fill="none" stroke="#333" stroke-width="1.3"><rect x="0.8" y="0.8" width="12.4" height="12.4" rx="2"/><path d="M1 10l4-4l3 3l2-2l3 3"/><circle cx="9.5" cy="4.5" r="1" fill="#333" stroke="none"/></svg>
<div class="t" style="left:1376px;width:40px;text-align:center;top:711.5px;font-size:10px;color:#333">无</div>
<div class="t" style="left:1425px;width:40px;text-align:center;top:711.5px;font-size:10px;color:#333">颜色</div>
<div class="t" style="left:1473px;width:40px;text-align:center;top:711.5px;font-size:10px;color:#333">纹理</div>
<div class="t" style="left:1522px;width:40px;text-align:center;top:711.5px;font-size:10px;color:#333">图片</div>
<div class="a" style="left:1371px;top:749.5px;width:11px;height:11px;border-radius:2px;background:#fff;border:1px solid #d8d8dc"></div>
<div class="t" style="left:1387px;top:750.0px;font-size:10px;color:#333;">水印填充</div>
<!--/PANEL-->
<!--STATUS--><div class="a" style="left:40px;top:829px;width:88px;height:23px;background:#eceff6"></div>
<svg style="left:13px;top:835px" width="15" height="12" viewBox="0 0 15 12" fill="none" stroke="#444" stroke-width="1.1"><path d="M1 1.5v9M14 1.5v9"/><rect x="3.5" y="1.5" width="8" height="9"/></svg>
<div class="a" style="left:39px;top:832px;width:1px;height:18px;background:#d6d9e0"></div>
<div class="a" style="left:128px;top:832px;width:1px;height:18px;background:#d6d9e0"></div>
<div class="a" style="left:173px;top:832px;width:1px;height:18px;background:#d6d9e0"></div>
<div class="a" style="left:237px;top:832px;width:1px;height:18px;background:#d6d9e0"></div>
<div class="t" style="left:48px;top:836.2px;font-size:10.5px;color:#222;">页面-1</div>
<div class="a" style="left:115px;top:840px;width:0;height:0;border-left:3px solid transparent;border-right:3px solid transparent;border-top:3.5px solid #555"></div>
<svg style="left:145px;top:836px" width="12" height="12" viewBox="0 0 12 12" stroke="#444" stroke-width="1.1"><path d="M6 0.5v11M0.5 6h11"/></svg>
<div class="t" style="left:192px;top:836.2px;font-size:10.5px;color:#2a9d7e;">页面-1</div>
<div class="t" style="left:1187px;top:836.5px;font-size:10px;color:#222;">主题计数</div>
<div class="t" style="left:1227.5px;top:836.2px;font-size:10.5px;color:#333;">:</div>
<div class="t" style="left:1239px;top:836.2px;font-size:10.5px;color:#333;">65</div>
<svg style="left:1253px;top:836px" width="11" height="10" viewBox="0 0 11 10"><path d="M0.5 3l2-2.5h6l2 2.5l-5 6.5z" fill="#fbc02d"/><path d="M0.5 3h10" stroke="#fde68a" stroke-width="0.8"/></svg>
<svg style="left:1270px;top:834px" width="300" height="16" viewBox="0 0 300 16" fill="none" stroke="#555" stroke-width="1.1">
 <path d="M4 3l4 -1l4 1l4 -1v11l-4 1l-4-1l-4 1z"/><path d="M8 2v11M12 3v11"/>
 <rect x="27.5" y="2" width="11" height="12"/><rect x="30" y="5" width="6" height="6"/><path d="M27.5 4.5h11M27.5 11.5h11" stroke-width="0.6"/>
 <rect x="51" y="2" width="11.5" height="12"/><path d="M53.5 4.5l2 2M60 4.5l-2 2M53.5 11.5l2-2M60 11.5l-2-2" stroke-width="1"/>
 <path d="M72 8h5" />
 <path d="M82 8h20" stroke="#222" stroke-width="1.6"/><circle cx="106" cy="8" r="4.3" fill="#fff" stroke="#222" stroke-width="1.6"/>
 <path d="M111 8h55" stroke="#d8dbe2" stroke-width="1"/>
 <path d="M175 3v10M170 8h10"/>
 <path d="M258 5V2h4M268 2h4v3M272 11v3h-4M262 14h-4v-3"/>
 <rect x="287" y="2" width="11" height="12"/><path d="M289.5 8h6"/>
</svg>
<div class="t" style="left:1459px;top:836.2px;font-size:10.5px;color:#333;">100%</div>
<div class="a" style="left:1489px;top:840px;width:0;height:0;border-left:2.5px solid transparent;border-right:2.5px solid transparent;border-top:3px solid #888"></div>
<div class="a" style="left:1436px;top:813px;width:141px;height:22px;background:#fff;border:1px solid #dde3ee"></div>
<svg style="left:1431px;top:810px" width="28" height="27" viewBox="0 0 28 27"><path d="M3 5 Q13 0 25 2 Q27 12 24 22 Q13 27 3 24 Q0 14 3 5z" fill="#f26a2a"/><path d="M19 8 Q13 5 9 8 Q7 11 12 13 Q17 14 16 17 Q13 20 8 18" fill="none" stroke="#fff" stroke-width="3.2" stroke-linecap="round"/></svg>
<svg style="left:1460px;top:816px" width="116" height="16" viewBox="0 0 116 16" fill="#1a6fd8" stroke="none">
 <path d="M2 4h10v6h-10z" fill="none" stroke="#1a6fd8" stroke-width="1.8"/><path d="M7 1v14" stroke="#1a6fd8" stroke-width="1.8"/>
 <circle cx="26" cy="6" r="1.6"/><path d="M31 8.5q1.5 0 1 2.5l-1.5 2" stroke="#1a6fd8" stroke-width="1.6" fill="none"/>
 <rect x="45" y="1" width="5" height="9" rx="2.5"/><path d="M43.5 7q0 4 4 4q4 0 4-4M47.5 11v3.5M45 14.5h5" fill="none" stroke="#1a6fd8" stroke-width="1.3"/>
 <rect x="62" y="3" width="13" height="10" rx="1.5" fill="none" stroke="#1a6fd8" stroke-width="1.4"/><path d="M64.5 6h8M64.5 8.5h8M66 11h5" stroke="#1a6fd8" stroke-width="1.1" stroke-dasharray="1.2 0.8"/>
 <path d="M82 4l4-2.5h5l4 2.5l-1.5 3.5l-1.5-0.8v8.3h-7v-8.3l-1.5 0.8z"/>
 <rect x="101" y="2" width="5.5" height="5.5" rx="1.5"/><rect x="108" y="2" width="5.5" height="5.5" rx="1.5"/><rect x="101" y="9" width="5.5" height="5.5" rx="1.5"/><rect x="108" y="9" width="5.5" height="5.5" rx="1.5"/>
</svg>
<!--/STATUS-->





</body></html>
